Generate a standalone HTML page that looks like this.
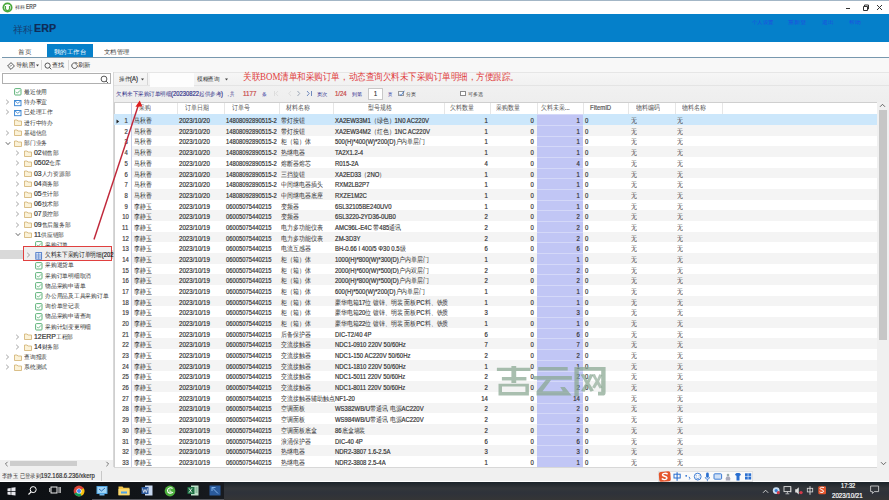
<!DOCTYPE html><html><head><meta charset="utf-8"><style>
*{margin:0;padding:0;box-sizing:border-box}
html,body{width:889px;height:500px;overflow:hidden;background:#fff;font-family:"Liberation Sans",sans-serif;color:#333}
div,p,svg{position:absolute}
p{white-space:nowrap;line-height:10px;-webkit-text-stroke-width:0.2px}
.c2{font-size:1.25em;font-family:"Liberation Sans",sans-serif;position:relative;top:0.4px;-webkit-text-stroke-width:0}
.c3{font-size:1.12em;font-family:"Liberation Sans",sans-serif;position:relative;top:0.4px;-webkit-text-stroke-width:0.3px}
.cjk .c,.cjk .c2,.cjk .c5{font-size:0.9375em;-webkit-text-stroke-width:0;top:0}
.cjk .c3{font-size:0.84em;-webkit-text-stroke-width:0;top:0}
.cjk i{opacity:1}
i{font-style:normal;opacity:0.35;-webkit-text-stroke-width:0}
.c5{font-size:1.25em;font-family:"Liberation Sans",sans-serif;position:relative;top:0.4px;-webkit-text-stroke-width:0.12px}
.c{font-size:1.25em;font-family:"Liberation Sans",sans-serif;-webkit-text-stroke-width:0.3px;position:relative;top:0.4px}
</style></head><body>

<div style="left:0.00px;top:0.00px;width:889.00px;height:1.00px;background:#a3b6c6"></div>
<svg style="left:2px;top:1.5px" width="12" height="11" viewBox="0 0 12 11"><circle cx="5.5" cy="5.5" r="5" fill="#4aa83c"/><circle cx="5.5" cy="5.5" r="3.2" fill="#fff"/><path d="M3.5 4 v2.6 a2 2 0 0 0 4 0 V4" stroke="#4aa83c" stroke-width="1.1" fill="none"/></svg>
<p style="left:14.60px;top:1.60px;font-size:5.50px;color:#444;transform:scaleX(1.029);transform-origin:left;"><span class="c">祥科</span></p>
<p style="left:25.80px;top:1.60px;font-size:7.00px;color:#444;transform:scaleX(0.708);transform-origin:left;">ERP</p>
<div style="left:846.00px;top:8.00px;width:4.00px;height:1.00px;background:#333"></div>
<svg style="left:862px;top:4px" width="7" height="7"><path d="M1.5 2.5h4v4h-4z M2.5 2.5v-1.5h4v4h-1" stroke="#333" stroke-width="1" fill="none"/></svg>
<svg style="left:876px;top:4px" width="7" height="7"><path d="M1 1L6 6M6 1L1 6" stroke="#333" stroke-width="1"/></svg>
<div style="left:0.00px;top:13.70px;width:889.00px;height:28.30px;background:#0580ca"></div>
<p style="left:13.00px;top:22.80px;font-size:10.50px;color:#173f72;transform:scale(1.152,1.150);transform-origin:left;"><span class="c3">祥科</span></p>
<p style="left:34.20px;top:22.80px;font-size:10.50px;color:#0f2c58;transform:scaleX(1.023);transform-origin:left;font-weight:bold">ERP</p>
<p style="left:751.50px;top:17.30px;font-size:5.00px;color:#1f4fe0;transform:scaleX(1.093);transform-origin:left;"><span class="c">个人设置</span></p>
<p style="left:788.00px;top:17.30px;font-size:5.00px;color:#1f4fe0;transform:scaleX(1.244);transform-origin:left;"><span class="c">重新登</span></p>
<p style="left:821.70px;top:17.30px;font-size:5.00px;color:#1f4fe0;transform:scaleX(1.152);transform-origin:left;"><span class="c">退出</span></p>
<p style="left:849.00px;top:17.30px;font-size:5.00px;color:#1f4fe0;transform:scaleX(1.173);transform-origin:left;"><span class="c">帮助</span></p>
<div style="left:47.20px;top:44.20px;width:45.90px;height:13.00px;background:#0580ca"></div>
<p style="left:18.00px;top:46.80px;font-size:6.40px;color:#333;transform:scaleX(1.100);transform-origin:left;"><span class="c">首页</span></p>
<p style="left:54.00px;top:46.80px;font-size:6.40px;color:#fff;transform:scaleX(1.067);transform-origin:left;"><span class="c">我的工作台</span></p>
<p style="left:103.70px;top:46.80px;font-size:6.40px;color:#333;transform:scaleX(1.054);transform-origin:left;"><span class="c">文档管理</span></p>
<div style="left:2.00px;top:56.80px;width:887.00px;height:1.10px;background:#7898ae"></div>
<div style="left:0.00px;top:58.00px;width:889.00px;height:14.00px;background:#f8f8f8"></div>
<svg style="left:7px;top:61.5px" width="8" height="8"><path d="M4 0.6L7.4 4L4 7.4L0.6 4Z" stroke="#444" stroke-width="0.9" fill="none"/><path d="M3 4.6l1.6-1.6" stroke="#444" stroke-width="0.8"/></svg>
<p style="left:16.00px;top:60.30px;font-size:6.00px;color:#333;transform:scaleX(1.049);transform-origin:left;"><span class="c">导航图</span></p>
<svg style="left:35.5px;top:64px" width="3" height="3"><path d="M0 0.5h3L1.5 2.5z" fill="#444"/></svg>
<div style="left:41.00px;top:60.00px;width:0.70px;height:10.00px;background:#d8d8d8"></div>
<svg style="left:43.5px;top:61.5px" width="8" height="8"><circle cx="3.6" cy="3.6" r="2.6" stroke="#444" stroke-width="0.9" fill="none"/><path d="M5.5 5.5L7.3 7.3" stroke="#444" stroke-width="0.9"/></svg>
<p style="left:52.30px;top:60.30px;font-size:6.00px;color:#333;transform:scaleX(1.013);transform-origin:left;"><span class="c">查找</span></p>
<div style="left:68.30px;top:60.00px;width:0.70px;height:10.00px;background:#d8d8d8"></div>
<svg style="left:70.5px;top:61.5px" width="8" height="8"><path d="M6.3 3.2A2.8 2.8 0 1 1 5 1.3" stroke="#444" stroke-width="0.9" fill="none"/><path d="M4.4 0.3L6.2 1.2L5 2.8" stroke="#444" stroke-width="0.8" fill="none"/></svg>
<p style="left:78.40px;top:60.30px;font-size:6.00px;color:#333;transform:scaleX(1.049);transform-origin:left;"><span class="c">刷新</span></p>
<div style="left:0.00px;top:72.00px;width:112.70px;height:396.00px;background:#fff"></div>
<div style="left:1.80px;top:73.00px;width:109.00px;height:11.30px;border:0.9px solid #b0b0b0;background:#fff"></div>
<svg style="left:100px;top:74.5px" width="9" height="9"><circle cx="4" cy="4" r="2.9" stroke="#444" stroke-width="0.9" fill="none"/><path d="M6.1 6.1L8 8" stroke="#444" stroke-width="0.9"/></svg>
<div style="left:112.70px;top:72.00px;width:0.90px;height:396.00px;background:#d8d8d8"></div>
<svg style="left:14.20px;top:88.40px" width="8" height="8"><rect x="0.6" y="0.6" width="6.4" height="6.4" rx="0.8" stroke="#4caa6a" stroke-width="0.9" fill="#fff"/><path d="M2 3.8l1.4 1.4l2.6-2.8" stroke="#4caa6a" stroke-width="0.8" fill="none"/></svg>
<p style="left:24.20px;top:87.00px;font-size:7.20px;color:#333;transform:scaleX(0.960);transform-origin:left;"><span class="c3">最近使用</span></p>
<svg style="left:5.20px;top:99.20px" width="5" height="6"><path d="M1.2 0.8L3.6 3L1.2 5.2" stroke="#999" stroke-width="0.9" fill="none"/></svg>
<svg style="left:14.20px;top:98.60px" width="8" height="8"><rect x="0.6" y="1.5" width="6.4" height="5.2" stroke="#2f7fd0" stroke-width="0.9" fill="#fff"/><path d="M0.8 1.8L3.8 4.4L6.8 1.8" stroke="#2f7fd0" stroke-width="0.8" fill="none"/></svg>
<p style="left:24.20px;top:97.20px;font-size:7.20px;color:#333;transform:scaleX(0.960);transform-origin:left;"><span class="c3">待办事宜</span></p>
<svg style="left:5.20px;top:109.40px" width="5" height="6"><path d="M1.2 0.8L3.6 3L1.2 5.2" stroke="#999" stroke-width="0.9" fill="none"/></svg>
<svg style="left:14.20px;top:108.80px" width="8" height="8"><rect x="0.6" y="1.5" width="6.4" height="5.2" stroke="#2f7fd0" stroke-width="0.9" fill="#fff"/><path d="M0.8 1.8L3.8 4.4L6.8 1.8" stroke="#2f7fd0" stroke-width="0.8" fill="none"/></svg>
<p style="left:24.20px;top:107.40px;font-size:7.20px;color:#333;transform:scaleX(0.960);transform-origin:left;"><span class="c3">已处理工作</span></p>
<svg style="left:14.20px;top:119.20px" width="8" height="7"><path d="M0.5 1h2.6l0.8 1h3.6v4.5h-7z" stroke="#d1b06e" stroke-width="0.8" fill="#fbf2d8"/></svg>
<p style="left:24.20px;top:117.60px;font-size:7.20px;color:#333;transform:scaleX(0.960);transform-origin:left;"><span class="c3">进行中待办</span></p>
<svg style="left:5.20px;top:129.80px" width="5" height="6"><path d="M1.2 0.8L3.6 3L1.2 5.2" stroke="#999" stroke-width="0.9" fill="none"/></svg>
<svg style="left:14.20px;top:129.40px" width="8" height="7"><path d="M0.5 1h2.6l0.8 1h3.6v4.5h-7z" stroke="#d1b06e" stroke-width="0.8" fill="#fbf2d8"/></svg>
<p style="left:24.20px;top:127.80px;font-size:7.20px;color:#333;transform:scaleX(0.960);transform-origin:left;"><span class="c3">基础信息</span></p>
<svg style="left:4.70px;top:140.50px" width="6" height="5"><path d="M0.8 1.2L3 3.6L5.2 1.2" stroke="#555" stroke-width="0.9" fill="none"/></svg>
<svg style="left:14.20px;top:139.60px" width="8" height="7"><path d="M0.5 1h2.6l0.8 1h3.6v4.5h-7z" stroke="#d1b06e" stroke-width="0.8" fill="#fbf2d8"/></svg>
<p style="left:24.20px;top:138.00px;font-size:7.20px;color:#333;transform:scaleX(0.960);transform-origin:left;"><span class="c3">部门业务</span></p>
<svg style="left:15.40px;top:150.20px" width="5" height="6"><path d="M1.2 0.8L3.6 3L1.2 5.2" stroke="#999" stroke-width="0.9" fill="none"/></svg>
<svg style="left:24.40px;top:149.80px" width="8" height="7"><path d="M0.5 1h2.6l0.8 1h3.6v4.5h-7z" stroke="#d1b06e" stroke-width="0.8" fill="#fbf2d8"/></svg>
<p style="left:34.40px;top:148.20px;font-size:7.20px;color:#333;transform:scaleX(0.960);transform-origin:left;">02<span class="c3">销售部</span></p>
<svg style="left:15.40px;top:160.40px" width="5" height="6"><path d="M1.2 0.8L3.6 3L1.2 5.2" stroke="#999" stroke-width="0.9" fill="none"/></svg>
<svg style="left:24.40px;top:160.00px" width="8" height="7"><path d="M0.5 1h2.6l0.8 1h3.6v4.5h-7z" stroke="#d1b06e" stroke-width="0.8" fill="#fbf2d8"/></svg>
<p style="left:34.40px;top:158.40px;font-size:7.20px;color:#333;transform:scaleX(0.960);transform-origin:left;">0502<span class="c3">仓库</span></p>
<svg style="left:15.40px;top:170.60px" width="5" height="6"><path d="M1.2 0.8L3.6 3L1.2 5.2" stroke="#999" stroke-width="0.9" fill="none"/></svg>
<svg style="left:24.40px;top:170.20px" width="8" height="7"><path d="M0.5 1h2.6l0.8 1h3.6v4.5h-7z" stroke="#d1b06e" stroke-width="0.8" fill="#fbf2d8"/></svg>
<p style="left:34.40px;top:168.60px;font-size:7.20px;color:#333;transform:scaleX(0.960);transform-origin:left;">03<span class="c3">人力资源部</span></p>
<svg style="left:15.40px;top:180.80px" width="5" height="6"><path d="M1.2 0.8L3.6 3L1.2 5.2" stroke="#999" stroke-width="0.9" fill="none"/></svg>
<svg style="left:24.40px;top:180.40px" width="8" height="7"><path d="M0.5 1h2.6l0.8 1h3.6v4.5h-7z" stroke="#d1b06e" stroke-width="0.8" fill="#fbf2d8"/></svg>
<p style="left:34.40px;top:178.80px;font-size:7.20px;color:#333;transform:scaleX(0.960);transform-origin:left;">04<span class="c3">商务部</span></p>
<svg style="left:15.40px;top:191.00px" width="5" height="6"><path d="M1.2 0.8L3.6 3L1.2 5.2" stroke="#999" stroke-width="0.9" fill="none"/></svg>
<svg style="left:24.40px;top:190.60px" width="8" height="7"><path d="M0.5 1h2.6l0.8 1h3.6v4.5h-7z" stroke="#d1b06e" stroke-width="0.8" fill="#fbf2d8"/></svg>
<p style="left:34.40px;top:189.00px;font-size:7.20px;color:#333;transform:scaleX(0.960);transform-origin:left;">05<span class="c3">生计部</span></p>
<svg style="left:15.40px;top:201.20px" width="5" height="6"><path d="M1.2 0.8L3.6 3L1.2 5.2" stroke="#999" stroke-width="0.9" fill="none"/></svg>
<svg style="left:24.40px;top:200.80px" width="8" height="7"><path d="M0.5 1h2.6l0.8 1h3.6v4.5h-7z" stroke="#d1b06e" stroke-width="0.8" fill="#fbf2d8"/></svg>
<p style="left:34.40px;top:199.20px;font-size:7.20px;color:#333;transform:scaleX(0.960);transform-origin:left;">06<span class="c3">技术部</span></p>
<svg style="left:15.40px;top:211.40px" width="5" height="6"><path d="M1.2 0.8L3.6 3L1.2 5.2" stroke="#999" stroke-width="0.9" fill="none"/></svg>
<svg style="left:24.40px;top:211.00px" width="8" height="7"><path d="M0.5 1h2.6l0.8 1h3.6v4.5h-7z" stroke="#d1b06e" stroke-width="0.8" fill="#fbf2d8"/></svg>
<p style="left:34.40px;top:209.40px;font-size:7.20px;color:#333;transform:scaleX(0.960);transform-origin:left;">07<span class="c3">质控部</span></p>
<svg style="left:15.40px;top:221.60px" width="5" height="6"><path d="M1.2 0.8L3.6 3L1.2 5.2" stroke="#999" stroke-width="0.9" fill="none"/></svg>
<svg style="left:24.40px;top:221.20px" width="8" height="7"><path d="M0.5 1h2.6l0.8 1h3.6v4.5h-7z" stroke="#d1b06e" stroke-width="0.8" fill="#fbf2d8"/></svg>
<p style="left:34.40px;top:219.60px;font-size:7.20px;color:#333;transform:scaleX(0.960);transform-origin:left;">09<span class="c3">售后服务部</span></p>
<svg style="left:14.90px;top:232.30px" width="6" height="5"><path d="M0.8 1.2L3 3.6L5.2 1.2" stroke="#555" stroke-width="0.9" fill="none"/></svg>
<svg style="left:24.40px;top:231.40px" width="8" height="7"><path d="M0.5 1h2.6l0.8 1h3.6v4.5h-7z" stroke="#d1b06e" stroke-width="0.8" fill="#fbf2d8"/></svg>
<p style="left:34.40px;top:229.80px;font-size:7.20px;color:#333;transform:scaleX(0.960);transform-origin:left;">11<span class="c3">供应链部</span></p>
<svg style="left:34.60px;top:241.40px" width="8" height="8"><rect x="0.6" y="0.6" width="6.4" height="6.4" rx="0.8" stroke="#4caa6a" stroke-width="0.9" fill="#fff"/><path d="M2 3.8l1.4 1.4l2.6-2.8" stroke="#4caa6a" stroke-width="0.8" fill="none"/></svg>
<p style="left:44.60px;top:240.00px;font-size:7.20px;color:#333;transform:scaleX(0.960);transform-origin:left;"><span class="c3">采购订单</span></p>
<div style="left:0.00px;top:250.00px;width:112.70px;height:9.40px;background:#d9d9d9"></div>
<div style="left:23.50px;top:247.00px;width:88.00px;height:13.40px;background:#efefef"></div>
<div style="left:22.80px;top:246.20px;width:89.60px;height:14.60px;border:1.1px solid #e0403f"></div>
<svg style="left:25.60px;top:252.20px" width="5" height="6"><path d="M1.2 0.8L3.6 3L1.2 5.2" stroke="#999" stroke-width="0.9" fill="none"/></svg>
<svg style="left:34.60px;top:251.60px" width="8" height="8"><rect x="0.8" y="0.6" width="5.8" height="6.6" stroke="#4a78c8" stroke-width="0.9" fill="#e2eaf8"/><path d="M0.8 3h5.8M0.8 5h5.8M3.7 0.6v6.6" stroke="#4a78c8" stroke-width="0.6"/></svg>
<p style="left:44.60px;top:250.20px;font-size:7.20px;color:#222;transform:scaleX(0.812);transform-origin:left;"><span class="c">欠料未下采购订单明细</span>(202</p>
<svg style="left:34.60px;top:261.80px" width="8" height="8"><rect x="0.6" y="0.6" width="6.4" height="6.4" rx="0.8" stroke="#4caa6a" stroke-width="0.9" fill="#fff"/><path d="M2 3.8l1.4 1.4l2.6-2.8" stroke="#4caa6a" stroke-width="0.8" fill="none"/></svg>
<p style="left:44.60px;top:260.40px;font-size:7.20px;color:#333;transform:scaleX(0.960);transform-origin:left;"><span class="c3">采购退货单</span></p>
<svg style="left:34.60px;top:272.00px" width="8" height="8"><rect x="0.6" y="0.6" width="6.4" height="6.4" rx="0.8" stroke="#4caa6a" stroke-width="0.9" fill="#fff"/><path d="M2 3.8l1.4 1.4l2.6-2.8" stroke="#4caa6a" stroke-width="0.8" fill="none"/></svg>
<p style="left:44.60px;top:270.60px;font-size:7.20px;color:#333;transform:scaleX(0.960);transform-origin:left;"><span class="c3">采购订单明细取消</span></p>
<svg style="left:34.60px;top:282.20px" width="8" height="8"><rect x="0.6" y="0.6" width="6.4" height="6.4" rx="0.8" stroke="#4caa6a" stroke-width="0.9" fill="#fff"/><path d="M2 3.8l1.4 1.4l2.6-2.8" stroke="#4caa6a" stroke-width="0.8" fill="none"/></svg>
<p style="left:44.60px;top:280.80px;font-size:7.20px;color:#333;transform:scaleX(0.960);transform-origin:left;"><span class="c3">物品采购申请单</span></p>
<svg style="left:34.60px;top:292.40px" width="8" height="8"><rect x="0.6" y="0.6" width="6.4" height="6.4" rx="0.8" stroke="#4caa6a" stroke-width="0.9" fill="#fff"/><path d="M2 3.8l1.4 1.4l2.6-2.8" stroke="#4caa6a" stroke-width="0.8" fill="none"/></svg>
<p style="left:44.60px;top:291.00px;font-size:7.20px;color:#333;transform:scaleX(0.960);transform-origin:left;"><span class="c3">办公用品及工具采购订单</span></p>
<svg style="left:34.60px;top:302.60px" width="8" height="8"><rect x="0.6" y="0.6" width="6.4" height="6.4" rx="0.8" stroke="#4caa6a" stroke-width="0.9" fill="#fff"/><path d="M2 3.8l1.4 1.4l2.6-2.8" stroke="#4caa6a" stroke-width="0.8" fill="none"/></svg>
<p style="left:44.60px;top:301.20px;font-size:7.20px;color:#333;transform:scaleX(0.960);transform-origin:left;"><span class="c3">询价单登记表</span></p>
<svg style="left:34.60px;top:312.80px" width="8" height="8"><rect x="0.6" y="0.6" width="6.4" height="6.4" rx="0.8" stroke="#4caa6a" stroke-width="0.9" fill="#fff"/><path d="M2 3.8l1.4 1.4l2.6-2.8" stroke="#4caa6a" stroke-width="0.8" fill="none"/></svg>
<p style="left:44.60px;top:311.40px;font-size:7.20px;color:#333;transform:scaleX(0.960);transform-origin:left;"><span class="c3">物品采购申请查询</span></p>
<svg style="left:34.60px;top:323.00px" width="8" height="8"><rect x="0.6" y="0.6" width="6.4" height="6.4" rx="0.8" stroke="#4caa6a" stroke-width="0.9" fill="#fff"/><path d="M2 3.8l1.4 1.4l2.6-2.8" stroke="#4caa6a" stroke-width="0.8" fill="none"/></svg>
<p style="left:44.60px;top:321.60px;font-size:7.20px;color:#333;transform:scaleX(0.960);transform-origin:left;"><span class="c3">采购计划变更明细</span></p>
<svg style="left:15.40px;top:333.80px" width="5" height="6"><path d="M1.2 0.8L3.6 3L1.2 5.2" stroke="#999" stroke-width="0.9" fill="none"/></svg>
<svg style="left:24.40px;top:333.40px" width="8" height="7"><path d="M0.5 1h2.6l0.8 1h3.6v4.5h-7z" stroke="#d1b06e" stroke-width="0.8" fill="#fbf2d8"/></svg>
<p style="left:34.40px;top:331.80px;font-size:7.20px;color:#333;transform:scaleX(0.960);transform-origin:left;">12ERP<span class="c3">工程部</span></p>
<svg style="left:15.40px;top:344.00px" width="5" height="6"><path d="M1.2 0.8L3.6 3L1.2 5.2" stroke="#999" stroke-width="0.9" fill="none"/></svg>
<svg style="left:24.40px;top:343.60px" width="8" height="7"><path d="M0.5 1h2.6l0.8 1h3.6v4.5h-7z" stroke="#d1b06e" stroke-width="0.8" fill="#fbf2d8"/></svg>
<p style="left:34.40px;top:342.00px;font-size:7.20px;color:#333;transform:scaleX(0.960);transform-origin:left;">14<span class="c3">财务部</span></p>
<svg style="left:5.20px;top:354.20px" width="5" height="6"><path d="M1.2 0.8L3.6 3L1.2 5.2" stroke="#999" stroke-width="0.9" fill="none"/></svg>
<svg style="left:14.20px;top:353.80px" width="8" height="7"><path d="M0.5 1h2.6l0.8 1h3.6v4.5h-7z" stroke="#d1b06e" stroke-width="0.8" fill="#fbf2d8"/></svg>
<p style="left:24.20px;top:352.20px;font-size:7.20px;color:#333;transform:scaleX(0.960);transform-origin:left;"><span class="c3">查询报表</span></p>
<svg style="left:5.20px;top:364.40px" width="5" height="6"><path d="M1.2 0.8L3.6 3L1.2 5.2" stroke="#999" stroke-width="0.9" fill="none"/></svg>
<svg style="left:14.20px;top:364.00px" width="8" height="7"><path d="M0.5 1h2.6l0.8 1h3.6v4.5h-7z" stroke="#d1b06e" stroke-width="0.8" fill="#fbf2d8"/></svg>
<p style="left:24.20px;top:362.40px;font-size:7.20px;color:#333;transform:scaleX(0.960);transform-origin:left;"><span class="c3">系统测试</span></p>
<div style="left:0.00px;top:459.60px;width:112.70px;height:7.40px;background:#f0f0f0"></div>
<div style="left:10.10px;top:460.60px;width:67.00px;height:5.40px;background:#cdcdcd"></div>
<svg style="left:4px;top:460.5px" width="5" height="6"><path d="M3.6 0.8L1.4 3L3.6 5.2" stroke="#666" stroke-width="0.9" fill="none"/></svg>
<svg style="left:104.5px;top:460.5px" width="5" height="6"><path d="M1.4 0.8L3.6 3L1.4 5.2" stroke="#666" stroke-width="0.9" fill="none"/></svg>
<div style="left:113.60px;top:72.00px;width:775.40px;height:29.50px;background:linear-gradient(#f3f3f3,#eeeeee)"></div>
<div style="left:113.60px;top:72.00px;width:775.40px;height:14.00px;background:linear-gradient(#f6f6f6,#f1f1f1);border-top:0.6px solid #e6e6e6;border-bottom:0.6px solid #e4e4e4"></div>
<div style="left:146.50px;top:73.00px;width:0.80px;height:12.00px;background:#d6d6d6"></div>
<div style="left:150.00px;top:72.50px;width:43.50px;height:14.00px;background:#fdfdfd"></div>
<p style="left:119.00px;top:73.60px;font-size:6.40px;color:#333;transform:scaleX(0.925);transform-origin:left;"><span class="c">操作</span>(A)</p>
<svg style="left:141px;top:77.5px" width="3" height="3"><path d="M0 0.5h3L1.5 2.5z" fill="#444"/></svg>
<p style="left:197.40px;top:73.60px;font-size:6.40px;color:#333;transform:scaleX(0.942);transform-origin:left;"><span class="c">模糊查询</span></p>
<svg style="left:225px;top:77.5px" width="3" height="3"><path d="M0 0.5h3L1.5 2.5z" fill="#444"/></svg>
<p style="left:243.00px;top:72.40px;font-size:8.40px;color:#e03c3c;transform:scale(1.065,1.250);transform-origin:left;font-family:'Liberation Serif',serif;-webkit-text-stroke-width:0"><span class="c5">关联</span>BOM<span class="c5">清单和采购订单<i>，</i>动态查询欠料未下采购订单明细<i>，</i>方便跟踪<i>。</i></span></p>
<p style="left:115.70px;top:88.90px;font-size:6.40px;color:#34348a;transform:scaleX(0.917);transform-origin:left;"><span class="c">欠料未下采购订单明细</span>(20230822<span class="c">起供参考</span>)</p>
<p style="left:225.70px;top:88.90px;font-size:6.40px;color:#34348a;transform:scaleX(0.717);transform-origin:left;"><span class="c"><i>，</i>共</span></p>
<p style="left:242.90px;top:88.90px;font-size:6.40px;color:#c84848;transform:scaleX(0.975);transform-origin:left;">1177</p>
<p style="left:262.00px;top:88.90px;font-size:6.40px;color:#3a3aa0;transform:scaleX(0.930);transform-origin:left;"><span class="c3">条</span></p>
<svg style="left:272px;top:90.40px" width="44" height="7"><path d="M2.5 1v5M6 1L3.8 3.5L6 6" stroke="#d8d8d8" stroke-width="0.8" fill="none"/><path d="M19 1L16.8 3.5L19 6" stroke="#d8d8d8" stroke-width="0.8" fill="none"/><path d="M25.5 1L27.7 3.5L25.5 6" stroke="#8a96a8" stroke-width="0.8" fill="none"/><path d="M35 1L37.2 3.5L35 6M39.5 1v5" stroke="#5070b0" stroke-width="0.8" fill="none"/></svg>
<p style="left:316.60px;top:88.90px;font-size:6.40px;color:#2c2c8c;transform:scaleX(1.062);transform-origin:left;"><span class="c3">页次</span></p>
<p style="left:334.50px;top:88.90px;font-size:6.40px;color:#c84848;transform:scaleX(0.940);transform-origin:left;">1/24</p>
<p style="left:352.30px;top:88.90px;font-size:6.40px;color:#2c2c8c;transform:scaleX(1.006);transform-origin:left;"><span class="c3">到第</span></p>
<div style="left:368.20px;top:88.00px;width:15.20px;height:11.50px;border:0.8px solid #c8c8c8;background:#fff"></div>
<p style="left:374.30px;top:88.90px;font-size:6.40px;color:#333;transform:scaleX(0.850);transform-origin:left;">1</p>
<p style="left:388.10px;top:88.90px;font-size:6.40px;color:#3a3aa0;transform:scaleX(0.874);transform-origin:left;"><span class="c3">页</span></p>
<div style="left:397.50px;top:90.70px;width:6.10px;height:5.80px;border:0.8px solid #9a9a9a;background:#f4f8fc"></div>
<svg style="left:397.5px;top:89.5px" width="7" height="7"><path d="M1.5 3.8L3 5.6L6.3 0.8" stroke="#3a70c0" stroke-width="0.8" fill="none"/></svg>
<p style="left:406.30px;top:88.90px;font-size:6.40px;color:#333;transform:scaleX(1.006);transform-origin:left;"><span class="c3">分页</span></p>
<div style="left:459.60px;top:90.70px;width:6.10px;height:5.80px;border:0.8px solid #8a8a8a;background:#fff"></div>
<p style="left:468.40px;top:88.90px;font-size:6.40px;color:#333;transform:scaleX(1.006);transform-origin:left;"><span class="c3">可多选</span></p>
<div style="left:113.50px;top:101.50px;width:763.50px;height:365.10px;background:#fff"></div>
<div style="left:113.50px;top:101.50px;width:763.50px;height:0.90px;background:#cfcfcf"></div>
<div style="left:113.50px;top:101.50px;width:0.90px;height:365.10px;background:#cfcfcf"></div>
<div style="left:130.90px;top:102.50px;width:0.80px;height:11.20px;background:#e6e6e6"></div>
<div style="left:177.10px;top:102.50px;width:0.80px;height:11.20px;background:#e6e6e6"></div>
<p style="left:139.40px;top:103.00px;font-size:7.00px;color:#555;transform:scaleX(0.850);transform-origin:left;"><span class="c">采购</span></p>
<div style="left:224.10px;top:102.50px;width:0.80px;height:11.20px;background:#e6e6e6"></div>
<p style="left:184.90px;top:103.00px;font-size:7.00px;color:#555;transform:scaleX(0.850);transform-origin:left;"><span class="c">订单日期</span></p>
<div style="left:278.60px;top:102.50px;width:0.80px;height:11.20px;background:#e6e6e6"></div>
<p style="left:231.50px;top:103.00px;font-size:7.00px;color:#555;transform:scaleX(0.850);transform-origin:left;"><span class="c">订单号</span></p>
<div style="left:332.60px;top:102.50px;width:0.80px;height:11.20px;background:#e6e6e6"></div>
<p style="left:286.00px;top:103.00px;font-size:7.00px;color:#555;transform:scaleX(0.850);transform-origin:left;"><span class="c">材料名称</span></p>
<div style="left:443.60px;top:102.50px;width:0.80px;height:11.20px;background:#e6e6e6"></div>
<p style="left:368.00px;top:103.00px;font-size:7.00px;color:#555;transform:scaleX(0.850);transform-origin:left;"><span class="c">型号规格</span></p>
<div style="left:489.60px;top:102.50px;width:0.80px;height:11.20px;background:#e6e6e6"></div>
<p style="left:450.00px;top:103.00px;font-size:7.00px;color:#555;transform:scaleX(0.850);transform-origin:left;"><span class="c">欠料数量</span></p>
<div style="left:536.60px;top:102.50px;width:0.80px;height:11.20px;background:#e6e6e6"></div>
<p style="left:496.30px;top:103.00px;font-size:7.00px;color:#555;transform:scaleX(0.850);transform-origin:left;"><span class="c">采购数量</span></p>
<div style="left:582.60px;top:102.50px;width:0.80px;height:11.20px;background:#e6e6e6"></div>
<p style="left:540.80px;top:103.00px;font-size:7.00px;color:#555;transform:scaleX(0.850);transform-origin:left;"><span class="c">欠料未采</span>...</p>
<div style="left:628.10px;top:102.50px;width:0.80px;height:11.20px;background:#e6e6e6"></div>
<p style="left:589.80px;top:103.00px;font-size:7.00px;color:#555;transform:scaleX(0.850);transform-origin:left;">FItemID</p>
<div style="left:674.60px;top:102.50px;width:0.80px;height:11.20px;background:#e6e6e6"></div>
<p style="left:635.70px;top:103.00px;font-size:7.00px;color:#555;transform:scaleX(0.850);transform-origin:left;"><span class="c">物料编码</span></p>
<div style="left:721.60px;top:102.50px;width:0.80px;height:11.20px;background:#e6e6e6"></div>
<p style="left:682.00px;top:103.00px;font-size:7.00px;color:#555;transform:scaleX(0.850);transform-origin:left;"><span class="c">物料名称</span></p>
<div style="left:113.50px;top:113.50px;width:763.50px;height:0.90px;background:#c4c4c4"></div>
<div style="left:114.40px;top:114.20px;width:762.60px;height:10.68px;background:#cce7fb"></div>
<div style="left:537.00px;top:114.20px;width:46.00px;height:10.68px;background:#c1c6f5;border-top:0.8px solid #d4d8f8"></div>
<svg style="left:115.8px;top:118.50px" width="4" height="5"><path d="M0.5 0.5L3.2 2.5L0.5 4.5z" fill="#222"/></svg>
<p style="right:760.70px;top:116.10px;font-size:7.00px;color:#444;transform:scaleX(0.850);transform-origin:right;">1</p>
<p style="left:133.80px;top:116.10px;font-size:7.00px;color:#333;transform:scaleX(0.850);transform-origin:left;"><span class="c">马秋香</span></p>
<p style="left:179.40px;top:116.10px;font-size:7.00px;color:#333;transform:scaleX(0.882);transform-origin:left;">2023/10/20</p>
<p style="left:225.80px;top:116.10px;font-size:7.00px;color:#333;transform:scaleX(0.835);transform-origin:left;">14808092890515-2</p>
<p style="left:281.00px;top:116.10px;font-size:7.00px;color:#333;transform:scaleX(0.850);transform-origin:left;"><span class="c">带灯按钮</span></p>
<p style="left:335.20px;top:116.10px;font-size:7.00px;color:#333;transform:scaleX(0.850);transform-origin:left;">XA2EW33M1<span class="c"><i>（</i>绿色<i>）</i></span>1N0 AC220V</p>
<p style="right:401.50px;top:116.10px;font-size:7.00px;color:#333;transform:scaleX(0.850);transform-origin:right;">1</p>
<p style="right:355.20px;top:116.10px;font-size:7.00px;color:#333;transform:scaleX(0.850);transform-origin:right;">0</p>
<p style="right:309.00px;top:116.10px;font-size:7.00px;color:#333;transform:scaleX(0.850);transform-origin:right;">1</p>
<p style="left:584.70px;top:116.10px;font-size:7.00px;color:#333;transform:scaleX(0.850);transform-origin:left;">0</p>
<p style="left:630.60px;top:116.10px;font-size:7.00px;color:#333;transform:scaleX(0.850);transform-origin:left;"><span class="c">无</span></p>
<p style="left:677.00px;top:116.10px;font-size:7.00px;color:#333;transform:scaleX(0.850);transform-origin:left;"><span class="c">无</span></p>
<div style="left:131.30px;top:124.88px;width:745.70px;height:10.68px;background:#f4f4f4"></div>
<div style="left:537.00px;top:124.88px;width:46.00px;height:10.68px;background:#c1c6f5;border-top:0.8px solid #d4d8f8"></div>
<p style="right:760.70px;top:126.78px;font-size:7.00px;color:#444;transform:scaleX(0.850);transform-origin:right;">2</p>
<p style="left:133.80px;top:126.78px;font-size:7.00px;color:#333;transform:scaleX(0.850);transform-origin:left;"><span class="c">马秋香</span></p>
<p style="left:179.40px;top:126.78px;font-size:7.00px;color:#333;transform:scaleX(0.882);transform-origin:left;">2023/10/20</p>
<p style="left:225.80px;top:126.78px;font-size:7.00px;color:#333;transform:scaleX(0.835);transform-origin:left;">14808092890515-2</p>
<p style="left:281.00px;top:126.78px;font-size:7.00px;color:#333;transform:scaleX(0.850);transform-origin:left;"><span class="c">带灯按钮</span></p>
<p style="left:335.20px;top:126.78px;font-size:7.00px;color:#333;transform:scaleX(0.850);transform-origin:left;">XA2EW34M2<span class="c"><i>（</i>红色<i>）</i></span>1NC AC220V</p>
<p style="right:401.50px;top:126.78px;font-size:7.00px;color:#333;transform:scaleX(0.850);transform-origin:right;">1</p>
<p style="right:355.20px;top:126.78px;font-size:7.00px;color:#333;transform:scaleX(0.850);transform-origin:right;">0</p>
<p style="right:309.00px;top:126.78px;font-size:7.00px;color:#333;transform:scaleX(0.850);transform-origin:right;">1</p>
<p style="left:584.70px;top:126.78px;font-size:7.00px;color:#333;transform:scaleX(0.850);transform-origin:left;">0</p>
<p style="left:630.60px;top:126.78px;font-size:7.00px;color:#333;transform:scaleX(0.850);transform-origin:left;"><span class="c">无</span></p>
<p style="left:677.00px;top:126.78px;font-size:7.00px;color:#333;transform:scaleX(0.850);transform-origin:left;"><span class="c">无</span></p>
<div style="left:537.00px;top:135.56px;width:46.00px;height:10.68px;background:#c1c6f5;border-top:0.8px solid #d4d8f8"></div>
<p style="right:760.70px;top:137.46px;font-size:7.00px;color:#444;transform:scaleX(0.850);transform-origin:right;">3</p>
<p style="left:133.80px;top:137.46px;font-size:7.00px;color:#333;transform:scaleX(0.850);transform-origin:left;"><span class="c">马秋香</span></p>
<p style="left:179.40px;top:137.46px;font-size:7.00px;color:#333;transform:scaleX(0.882);transform-origin:left;">2023/10/20</p>
<p style="left:225.80px;top:137.46px;font-size:7.00px;color:#333;transform:scaleX(0.835);transform-origin:left;">14808092890515-2</p>
<p style="left:281.00px;top:137.46px;font-size:7.00px;color:#333;transform:scaleX(0.850);transform-origin:left;"><span class="c">柜<i>（</i>箱<i>）</i>体</span></p>
<p style="left:335.20px;top:137.46px;font-size:7.00px;color:#333;transform:scaleX(0.850);transform-origin:left;">500(H)*400(W)*200(D)<span class="c">户内单层门</span></p>
<p style="right:401.50px;top:137.46px;font-size:7.00px;color:#333;transform:scaleX(0.850);transform-origin:right;">1</p>
<p style="right:355.20px;top:137.46px;font-size:7.00px;color:#333;transform:scaleX(0.850);transform-origin:right;">0</p>
<p style="right:309.00px;top:137.46px;font-size:7.00px;color:#333;transform:scaleX(0.850);transform-origin:right;">1</p>
<p style="left:584.70px;top:137.46px;font-size:7.00px;color:#333;transform:scaleX(0.850);transform-origin:left;">0</p>
<p style="left:630.60px;top:137.46px;font-size:7.00px;color:#333;transform:scaleX(0.850);transform-origin:left;"><span class="c">无</span></p>
<p style="left:677.00px;top:137.46px;font-size:7.00px;color:#333;transform:scaleX(0.850);transform-origin:left;"><span class="c">无</span></p>
<div style="left:131.30px;top:146.24px;width:745.70px;height:10.68px;background:#f4f4f4"></div>
<div style="left:537.00px;top:146.24px;width:46.00px;height:10.68px;background:#c1c6f5;border-top:0.8px solid #d4d8f8"></div>
<p style="right:760.70px;top:148.14px;font-size:7.00px;color:#444;transform:scaleX(0.850);transform-origin:right;">4</p>
<p style="left:133.80px;top:148.14px;font-size:7.00px;color:#333;transform:scaleX(0.850);transform-origin:left;"><span class="c">马秋香</span></p>
<p style="left:179.40px;top:148.14px;font-size:7.00px;color:#333;transform:scaleX(0.882);transform-origin:left;">2023/10/20</p>
<p style="left:225.80px;top:148.14px;font-size:7.00px;color:#333;transform:scaleX(0.835);transform-origin:left;">14808092890515-2</p>
<p style="left:281.00px;top:148.14px;font-size:7.00px;color:#333;transform:scaleX(0.850);transform-origin:left;"><span class="c">热继电器</span></p>
<p style="left:335.20px;top:148.14px;font-size:7.00px;color:#333;transform:scaleX(0.850);transform-origin:left;">TA2X1.2-4</p>
<p style="right:401.50px;top:148.14px;font-size:7.00px;color:#333;transform:scaleX(0.850);transform-origin:right;">1</p>
<p style="right:355.20px;top:148.14px;font-size:7.00px;color:#333;transform:scaleX(0.850);transform-origin:right;">0</p>
<p style="right:309.00px;top:148.14px;font-size:7.00px;color:#333;transform:scaleX(0.850);transform-origin:right;">1</p>
<p style="left:584.70px;top:148.14px;font-size:7.00px;color:#333;transform:scaleX(0.850);transform-origin:left;">0</p>
<p style="left:630.60px;top:148.14px;font-size:7.00px;color:#333;transform:scaleX(0.850);transform-origin:left;"><span class="c">无</span></p>
<p style="left:677.00px;top:148.14px;font-size:7.00px;color:#333;transform:scaleX(0.850);transform-origin:left;"><span class="c">无</span></p>
<div style="left:537.00px;top:156.92px;width:46.00px;height:10.68px;background:#c1c6f5;border-top:0.8px solid #d4d8f8"></div>
<p style="right:760.70px;top:158.82px;font-size:7.00px;color:#444;transform:scaleX(0.850);transform-origin:right;">5</p>
<p style="left:133.80px;top:158.82px;font-size:7.00px;color:#333;transform:scaleX(0.850);transform-origin:left;"><span class="c">马秋香</span></p>
<p style="left:179.40px;top:158.82px;font-size:7.00px;color:#333;transform:scaleX(0.882);transform-origin:left;">2023/10/20</p>
<p style="left:225.80px;top:158.82px;font-size:7.00px;color:#333;transform:scaleX(0.835);transform-origin:left;">14808092890515-2</p>
<p style="left:281.00px;top:158.82px;font-size:7.00px;color:#333;transform:scaleX(0.850);transform-origin:left;"><span class="c">熔断器熔芯</span></p>
<p style="left:335.20px;top:158.82px;font-size:7.00px;color:#333;transform:scaleX(0.850);transform-origin:left;">R015-2A</p>
<p style="right:401.50px;top:158.82px;font-size:7.00px;color:#333;transform:scaleX(0.850);transform-origin:right;">4</p>
<p style="right:355.20px;top:158.82px;font-size:7.00px;color:#333;transform:scaleX(0.850);transform-origin:right;">0</p>
<p style="right:309.00px;top:158.82px;font-size:7.00px;color:#333;transform:scaleX(0.850);transform-origin:right;">4</p>
<p style="left:584.70px;top:158.82px;font-size:7.00px;color:#333;transform:scaleX(0.850);transform-origin:left;">0</p>
<p style="left:630.60px;top:158.82px;font-size:7.00px;color:#333;transform:scaleX(0.850);transform-origin:left;"><span class="c">无</span></p>
<p style="left:677.00px;top:158.82px;font-size:7.00px;color:#333;transform:scaleX(0.850);transform-origin:left;"><span class="c">无</span></p>
<div style="left:131.30px;top:167.60px;width:745.70px;height:10.68px;background:#f4f4f4"></div>
<div style="left:537.00px;top:167.60px;width:46.00px;height:10.68px;background:#c1c6f5;border-top:0.8px solid #d4d8f8"></div>
<p style="right:760.70px;top:169.50px;font-size:7.00px;color:#444;transform:scaleX(0.850);transform-origin:right;">6</p>
<p style="left:133.80px;top:169.50px;font-size:7.00px;color:#333;transform:scaleX(0.850);transform-origin:left;"><span class="c">马秋香</span></p>
<p style="left:179.40px;top:169.50px;font-size:7.00px;color:#333;transform:scaleX(0.882);transform-origin:left;">2023/10/20</p>
<p style="left:225.80px;top:169.50px;font-size:7.00px;color:#333;transform:scaleX(0.835);transform-origin:left;">14808092890515-2</p>
<p style="left:281.00px;top:169.50px;font-size:7.00px;color:#333;transform:scaleX(0.850);transform-origin:left;"><span class="c">三挡旋钮</span></p>
<p style="left:335.20px;top:169.50px;font-size:7.00px;color:#333;transform:scaleX(0.850);transform-origin:left;">XA2ED33<span class="c"><i>（</i></span>2NO<span class="c"><i>）</i></span></p>
<p style="right:401.50px;top:169.50px;font-size:7.00px;color:#333;transform:scaleX(0.850);transform-origin:right;">1</p>
<p style="right:355.20px;top:169.50px;font-size:7.00px;color:#333;transform:scaleX(0.850);transform-origin:right;">0</p>
<p style="right:309.00px;top:169.50px;font-size:7.00px;color:#333;transform:scaleX(0.850);transform-origin:right;">1</p>
<p style="left:584.70px;top:169.50px;font-size:7.00px;color:#333;transform:scaleX(0.850);transform-origin:left;">0</p>
<p style="left:630.60px;top:169.50px;font-size:7.00px;color:#333;transform:scaleX(0.850);transform-origin:left;"><span class="c">无</span></p>
<p style="left:677.00px;top:169.50px;font-size:7.00px;color:#333;transform:scaleX(0.850);transform-origin:left;"><span class="c">无</span></p>
<div style="left:537.00px;top:178.28px;width:46.00px;height:10.68px;background:#c1c6f5;border-top:0.8px solid #d4d8f8"></div>
<p style="right:760.70px;top:180.18px;font-size:7.00px;color:#444;transform:scaleX(0.850);transform-origin:right;">7</p>
<p style="left:133.80px;top:180.18px;font-size:7.00px;color:#333;transform:scaleX(0.850);transform-origin:left;"><span class="c">马秋香</span></p>
<p style="left:179.40px;top:180.18px;font-size:7.00px;color:#333;transform:scaleX(0.882);transform-origin:left;">2023/10/20</p>
<p style="left:225.80px;top:180.18px;font-size:7.00px;color:#333;transform:scaleX(0.835);transform-origin:left;">14808092890515-2</p>
<p style="left:281.00px;top:180.18px;font-size:7.00px;color:#333;transform:scaleX(0.850);transform-origin:left;"><span class="c">中间继电器插头</span></p>
<p style="left:335.20px;top:180.18px;font-size:7.00px;color:#333;transform:scaleX(0.850);transform-origin:left;">RXM2LB2P7</p>
<p style="right:401.50px;top:180.18px;font-size:7.00px;color:#333;transform:scaleX(0.850);transform-origin:right;">1</p>
<p style="right:355.20px;top:180.18px;font-size:7.00px;color:#333;transform:scaleX(0.850);transform-origin:right;">0</p>
<p style="right:309.00px;top:180.18px;font-size:7.00px;color:#333;transform:scaleX(0.850);transform-origin:right;">1</p>
<p style="left:584.70px;top:180.18px;font-size:7.00px;color:#333;transform:scaleX(0.850);transform-origin:left;">0</p>
<p style="left:630.60px;top:180.18px;font-size:7.00px;color:#333;transform:scaleX(0.850);transform-origin:left;"><span class="c">无</span></p>
<p style="left:677.00px;top:180.18px;font-size:7.00px;color:#333;transform:scaleX(0.850);transform-origin:left;"><span class="c">无</span></p>
<div style="left:131.30px;top:188.96px;width:745.70px;height:10.68px;background:#f4f4f4"></div>
<div style="left:537.00px;top:188.96px;width:46.00px;height:10.68px;background:#c1c6f5;border-top:0.8px solid #d4d8f8"></div>
<p style="right:760.70px;top:190.86px;font-size:7.00px;color:#444;transform:scaleX(0.850);transform-origin:right;">8</p>
<p style="left:133.80px;top:190.86px;font-size:7.00px;color:#333;transform:scaleX(0.850);transform-origin:left;"><span class="c">马秋香</span></p>
<p style="left:179.40px;top:190.86px;font-size:7.00px;color:#333;transform:scaleX(0.882);transform-origin:left;">2023/10/20</p>
<p style="left:225.80px;top:190.86px;font-size:7.00px;color:#333;transform:scaleX(0.835);transform-origin:left;">14808092890515-2</p>
<p style="left:281.00px;top:190.86px;font-size:7.00px;color:#333;transform:scaleX(0.850);transform-origin:left;"><span class="c">中间继电器底座</span></p>
<p style="left:335.20px;top:190.86px;font-size:7.00px;color:#333;transform:scaleX(0.850);transform-origin:left;">RXZE1M2C</p>
<p style="right:401.50px;top:190.86px;font-size:7.00px;color:#333;transform:scaleX(0.850);transform-origin:right;">1</p>
<p style="right:355.20px;top:190.86px;font-size:7.00px;color:#333;transform:scaleX(0.850);transform-origin:right;">0</p>
<p style="right:309.00px;top:190.86px;font-size:7.00px;color:#333;transform:scaleX(0.850);transform-origin:right;">1</p>
<p style="left:584.70px;top:190.86px;font-size:7.00px;color:#333;transform:scaleX(0.850);transform-origin:left;">0</p>
<p style="left:630.60px;top:190.86px;font-size:7.00px;color:#333;transform:scaleX(0.850);transform-origin:left;"><span class="c">无</span></p>
<p style="left:677.00px;top:190.86px;font-size:7.00px;color:#333;transform:scaleX(0.850);transform-origin:left;"><span class="c">无</span></p>
<div style="left:537.00px;top:199.64px;width:46.00px;height:10.68px;background:#c1c6f5;border-top:0.8px solid #d4d8f8"></div>
<p style="right:760.70px;top:201.54px;font-size:7.00px;color:#444;transform:scaleX(0.850);transform-origin:right;">9</p>
<p style="left:133.80px;top:201.54px;font-size:7.00px;color:#333;transform:scaleX(0.850);transform-origin:left;"><span class="c">李静玉</span></p>
<p style="left:179.40px;top:201.54px;font-size:7.00px;color:#333;transform:scaleX(0.882);transform-origin:left;">2023/10/19</p>
<p style="left:225.80px;top:201.54px;font-size:7.00px;color:#333;transform:scaleX(0.835);transform-origin:left;">06005075440215</p>
<p style="left:281.00px;top:201.54px;font-size:7.00px;color:#333;transform:scaleX(0.850);transform-origin:left;"><span class="c">变频器</span></p>
<p style="left:335.20px;top:201.54px;font-size:7.00px;color:#333;transform:scaleX(0.850);transform-origin:left;">6SL32105BE240UV0</p>
<p style="right:401.50px;top:201.54px;font-size:7.00px;color:#333;transform:scaleX(0.850);transform-origin:right;">1</p>
<p style="right:355.20px;top:201.54px;font-size:7.00px;color:#333;transform:scaleX(0.850);transform-origin:right;">0</p>
<p style="right:309.00px;top:201.54px;font-size:7.00px;color:#333;transform:scaleX(0.850);transform-origin:right;">1</p>
<p style="left:584.70px;top:201.54px;font-size:7.00px;color:#333;transform:scaleX(0.850);transform-origin:left;">0</p>
<p style="left:630.60px;top:201.54px;font-size:7.00px;color:#333;transform:scaleX(0.850);transform-origin:left;"><span class="c">无</span></p>
<p style="left:677.00px;top:201.54px;font-size:7.00px;color:#333;transform:scaleX(0.850);transform-origin:left;"><span class="c">无</span></p>
<div style="left:131.30px;top:210.32px;width:745.70px;height:10.68px;background:#f4f4f4"></div>
<div style="left:537.00px;top:210.32px;width:46.00px;height:10.68px;background:#c1c6f5;border-top:0.8px solid #d4d8f8"></div>
<p style="right:760.70px;top:212.22px;font-size:7.00px;color:#444;transform:scaleX(0.850);transform-origin:right;">10</p>
<p style="left:133.80px;top:212.22px;font-size:7.00px;color:#333;transform:scaleX(0.850);transform-origin:left;"><span class="c">李静玉</span></p>
<p style="left:179.40px;top:212.22px;font-size:7.00px;color:#333;transform:scaleX(0.882);transform-origin:left;">2023/10/19</p>
<p style="left:225.80px;top:212.22px;font-size:7.00px;color:#333;transform:scaleX(0.835);transform-origin:left;">06005075440215</p>
<p style="left:281.00px;top:212.22px;font-size:7.00px;color:#333;transform:scaleX(0.850);transform-origin:left;"><span class="c">变频器</span></p>
<p style="left:335.20px;top:212.22px;font-size:7.00px;color:#333;transform:scaleX(0.850);transform-origin:left;">6SL3220-2YD36-0UB0</p>
<p style="right:401.50px;top:212.22px;font-size:7.00px;color:#333;transform:scaleX(0.850);transform-origin:right;">2</p>
<p style="right:355.20px;top:212.22px;font-size:7.00px;color:#333;transform:scaleX(0.850);transform-origin:right;">0</p>
<p style="right:309.00px;top:212.22px;font-size:7.00px;color:#333;transform:scaleX(0.850);transform-origin:right;">2</p>
<p style="left:584.70px;top:212.22px;font-size:7.00px;color:#333;transform:scaleX(0.850);transform-origin:left;">0</p>
<p style="left:630.60px;top:212.22px;font-size:7.00px;color:#333;transform:scaleX(0.850);transform-origin:left;"><span class="c">无</span></p>
<p style="left:677.00px;top:212.22px;font-size:7.00px;color:#333;transform:scaleX(0.850);transform-origin:left;"><span class="c">无</span></p>
<div style="left:537.00px;top:221.00px;width:46.00px;height:10.68px;background:#c1c6f5;border-top:0.8px solid #d4d8f8"></div>
<p style="right:760.70px;top:222.90px;font-size:7.00px;color:#444;transform:scaleX(0.850);transform-origin:right;">11</p>
<p style="left:133.80px;top:222.90px;font-size:7.00px;color:#333;transform:scaleX(0.850);transform-origin:left;"><span class="c">李静玉</span></p>
<p style="left:179.40px;top:222.90px;font-size:7.00px;color:#333;transform:scaleX(0.882);transform-origin:left;">2023/10/19</p>
<p style="left:225.80px;top:222.90px;font-size:7.00px;color:#333;transform:scaleX(0.835);transform-origin:left;">06005075440215</p>
<p style="left:281.00px;top:222.90px;font-size:7.00px;color:#333;transform:scaleX(0.850);transform-origin:left;"><span class="c">电力多功能仪表</span></p>
<p style="left:335.20px;top:222.90px;font-size:7.00px;color:#333;transform:scaleX(0.850);transform-origin:left;">AMC96L-E4C <span class="c">带</span>485<span class="c">通讯</span></p>
<p style="right:401.50px;top:222.90px;font-size:7.00px;color:#333;transform:scaleX(0.850);transform-origin:right;">2</p>
<p style="right:355.20px;top:222.90px;font-size:7.00px;color:#333;transform:scaleX(0.850);transform-origin:right;">0</p>
<p style="right:309.00px;top:222.90px;font-size:7.00px;color:#333;transform:scaleX(0.850);transform-origin:right;">2</p>
<p style="left:584.70px;top:222.90px;font-size:7.00px;color:#333;transform:scaleX(0.850);transform-origin:left;">0</p>
<p style="left:630.60px;top:222.90px;font-size:7.00px;color:#333;transform:scaleX(0.850);transform-origin:left;"><span class="c">无</span></p>
<p style="left:677.00px;top:222.90px;font-size:7.00px;color:#333;transform:scaleX(0.850);transform-origin:left;"><span class="c">无</span></p>
<div style="left:131.30px;top:231.68px;width:745.70px;height:10.68px;background:#f4f4f4"></div>
<div style="left:537.00px;top:231.68px;width:46.00px;height:10.68px;background:#c1c6f5;border-top:0.8px solid #d4d8f8"></div>
<p style="right:760.70px;top:233.58px;font-size:7.00px;color:#444;transform:scaleX(0.850);transform-origin:right;">12</p>
<p style="left:133.80px;top:233.58px;font-size:7.00px;color:#333;transform:scaleX(0.850);transform-origin:left;"><span class="c">李静玉</span></p>
<p style="left:179.40px;top:233.58px;font-size:7.00px;color:#333;transform:scaleX(0.882);transform-origin:left;">2023/10/19</p>
<p style="left:225.80px;top:233.58px;font-size:7.00px;color:#333;transform:scaleX(0.835);transform-origin:left;">06005075440215</p>
<p style="left:281.00px;top:233.58px;font-size:7.00px;color:#333;transform:scaleX(0.850);transform-origin:left;"><span class="c">电力多功能仪表</span></p>
<p style="left:335.20px;top:233.58px;font-size:7.00px;color:#333;transform:scaleX(0.850);transform-origin:left;">ZM-3D3Y</p>
<p style="right:401.50px;top:233.58px;font-size:7.00px;color:#333;transform:scaleX(0.850);transform-origin:right;">2</p>
<p style="right:355.20px;top:233.58px;font-size:7.00px;color:#333;transform:scaleX(0.850);transform-origin:right;">0</p>
<p style="right:309.00px;top:233.58px;font-size:7.00px;color:#333;transform:scaleX(0.850);transform-origin:right;">2</p>
<p style="left:584.70px;top:233.58px;font-size:7.00px;color:#333;transform:scaleX(0.850);transform-origin:left;">0</p>
<p style="left:630.60px;top:233.58px;font-size:7.00px;color:#333;transform:scaleX(0.850);transform-origin:left;"><span class="c">无</span></p>
<p style="left:677.00px;top:233.58px;font-size:7.00px;color:#333;transform:scaleX(0.850);transform-origin:left;"><span class="c">无</span></p>
<div style="left:537.00px;top:242.36px;width:46.00px;height:10.68px;background:#c1c6f5;border-top:0.8px solid #d4d8f8"></div>
<p style="right:760.70px;top:244.26px;font-size:7.00px;color:#444;transform:scaleX(0.850);transform-origin:right;">13</p>
<p style="left:133.80px;top:244.26px;font-size:7.00px;color:#333;transform:scaleX(0.850);transform-origin:left;"><span class="c">李静玉</span></p>
<p style="left:179.40px;top:244.26px;font-size:7.00px;color:#333;transform:scaleX(0.882);transform-origin:left;">2023/10/19</p>
<p style="left:225.80px;top:244.26px;font-size:7.00px;color:#333;transform:scaleX(0.835);transform-origin:left;">06005075440215</p>
<p style="left:281.00px;top:244.26px;font-size:7.00px;color:#333;transform:scaleX(0.850);transform-origin:left;"><span class="c">电流互感器</span></p>
<p style="left:335.20px;top:244.26px;font-size:7.00px;color:#333;transform:scaleX(0.850);transform-origin:left;">BH-0.66 I  400/5 Φ30 0.5<span class="c">级</span></p>
<p style="right:401.50px;top:244.26px;font-size:7.00px;color:#333;transform:scaleX(0.850);transform-origin:right;">6</p>
<p style="right:355.20px;top:244.26px;font-size:7.00px;color:#333;transform:scaleX(0.850);transform-origin:right;">0</p>
<p style="right:309.00px;top:244.26px;font-size:7.00px;color:#333;transform:scaleX(0.850);transform-origin:right;">6</p>
<p style="left:584.70px;top:244.26px;font-size:7.00px;color:#333;transform:scaleX(0.850);transform-origin:left;">0</p>
<p style="left:630.60px;top:244.26px;font-size:7.00px;color:#333;transform:scaleX(0.850);transform-origin:left;"><span class="c">无</span></p>
<p style="left:677.00px;top:244.26px;font-size:7.00px;color:#333;transform:scaleX(0.850);transform-origin:left;"><span class="c">无</span></p>
<div style="left:131.30px;top:253.04px;width:745.70px;height:10.68px;background:#f4f4f4"></div>
<div style="left:537.00px;top:253.04px;width:46.00px;height:10.68px;background:#c1c6f5;border-top:0.8px solid #d4d8f8"></div>
<p style="right:760.70px;top:254.94px;font-size:7.00px;color:#444;transform:scaleX(0.850);transform-origin:right;">14</p>
<p style="left:133.80px;top:254.94px;font-size:7.00px;color:#333;transform:scaleX(0.850);transform-origin:left;"><span class="c">李静玉</span></p>
<p style="left:179.40px;top:254.94px;font-size:7.00px;color:#333;transform:scaleX(0.882);transform-origin:left;">2023/10/19</p>
<p style="left:225.80px;top:254.94px;font-size:7.00px;color:#333;transform:scaleX(0.835);transform-origin:left;">06005075440215</p>
<p style="left:281.00px;top:254.94px;font-size:7.00px;color:#333;transform:scaleX(0.850);transform-origin:left;"><span class="c">柜<i>（</i>箱<i>）</i>体</span></p>
<p style="left:335.20px;top:254.94px;font-size:7.00px;color:#333;transform:scaleX(0.850);transform-origin:left;">1000(H)*800(W)*300(D)<span class="c">户内单层门</span></p>
<p style="right:401.50px;top:254.94px;font-size:7.00px;color:#333;transform:scaleX(0.850);transform-origin:right;">1</p>
<p style="right:355.20px;top:254.94px;font-size:7.00px;color:#333;transform:scaleX(0.850);transform-origin:right;">0</p>
<p style="right:309.00px;top:254.94px;font-size:7.00px;color:#333;transform:scaleX(0.850);transform-origin:right;">1</p>
<p style="left:584.70px;top:254.94px;font-size:7.00px;color:#333;transform:scaleX(0.850);transform-origin:left;">0</p>
<p style="left:630.60px;top:254.94px;font-size:7.00px;color:#333;transform:scaleX(0.850);transform-origin:left;"><span class="c">无</span></p>
<p style="left:677.00px;top:254.94px;font-size:7.00px;color:#333;transform:scaleX(0.850);transform-origin:left;"><span class="c">无</span></p>
<div style="left:537.00px;top:263.72px;width:46.00px;height:10.68px;background:#c1c6f5;border-top:0.8px solid #d4d8f8"></div>
<p style="right:760.70px;top:265.62px;font-size:7.00px;color:#444;transform:scaleX(0.850);transform-origin:right;">15</p>
<p style="left:133.80px;top:265.62px;font-size:7.00px;color:#333;transform:scaleX(0.850);transform-origin:left;"><span class="c">李静玉</span></p>
<p style="left:179.40px;top:265.62px;font-size:7.00px;color:#333;transform:scaleX(0.882);transform-origin:left;">2023/10/19</p>
<p style="left:225.80px;top:265.62px;font-size:7.00px;color:#333;transform:scaleX(0.835);transform-origin:left;">06005075440215</p>
<p style="left:281.00px;top:265.62px;font-size:7.00px;color:#333;transform:scaleX(0.850);transform-origin:left;"><span class="c">柜<i>（</i>箱<i>）</i>体</span></p>
<p style="left:335.20px;top:265.62px;font-size:7.00px;color:#333;transform:scaleX(0.850);transform-origin:left;">2000(H)*600(W)*500(D)<span class="c">户内双层门</span></p>
<p style="right:401.50px;top:265.62px;font-size:7.00px;color:#333;transform:scaleX(0.850);transform-origin:right;">2</p>
<p style="right:355.20px;top:265.62px;font-size:7.00px;color:#333;transform:scaleX(0.850);transform-origin:right;">0</p>
<p style="right:309.00px;top:265.62px;font-size:7.00px;color:#333;transform:scaleX(0.850);transform-origin:right;">2</p>
<p style="left:584.70px;top:265.62px;font-size:7.00px;color:#333;transform:scaleX(0.850);transform-origin:left;">0</p>
<p style="left:630.60px;top:265.62px;font-size:7.00px;color:#333;transform:scaleX(0.850);transform-origin:left;"><span class="c">无</span></p>
<p style="left:677.00px;top:265.62px;font-size:7.00px;color:#333;transform:scaleX(0.850);transform-origin:left;"><span class="c">无</span></p>
<div style="left:131.30px;top:274.40px;width:745.70px;height:10.68px;background:#f4f4f4"></div>
<div style="left:537.00px;top:274.40px;width:46.00px;height:10.68px;background:#c1c6f5;border-top:0.8px solid #d4d8f8"></div>
<p style="right:760.70px;top:276.30px;font-size:7.00px;color:#444;transform:scaleX(0.850);transform-origin:right;">16</p>
<p style="left:133.80px;top:276.30px;font-size:7.00px;color:#333;transform:scaleX(0.850);transform-origin:left;"><span class="c">李静玉</span></p>
<p style="left:179.40px;top:276.30px;font-size:7.00px;color:#333;transform:scaleX(0.882);transform-origin:left;">2023/10/19</p>
<p style="left:225.80px;top:276.30px;font-size:7.00px;color:#333;transform:scaleX(0.835);transform-origin:left;">06005075440215</p>
<p style="left:281.00px;top:276.30px;font-size:7.00px;color:#333;transform:scaleX(0.850);transform-origin:left;"><span class="c">柜<i>（</i>箱<i>）</i>体</span></p>
<p style="left:335.20px;top:276.30px;font-size:7.00px;color:#333;transform:scaleX(0.850);transform-origin:left;">2000(H)*800(W)*500(D)<span class="c">户内单层门</span></p>
<p style="right:401.50px;top:276.30px;font-size:7.00px;color:#333;transform:scaleX(0.850);transform-origin:right;">2</p>
<p style="right:355.20px;top:276.30px;font-size:7.00px;color:#333;transform:scaleX(0.850);transform-origin:right;">0</p>
<p style="right:309.00px;top:276.30px;font-size:7.00px;color:#333;transform:scaleX(0.850);transform-origin:right;">2</p>
<p style="left:584.70px;top:276.30px;font-size:7.00px;color:#333;transform:scaleX(0.850);transform-origin:left;">0</p>
<p style="left:630.60px;top:276.30px;font-size:7.00px;color:#333;transform:scaleX(0.850);transform-origin:left;"><span class="c">无</span></p>
<p style="left:677.00px;top:276.30px;font-size:7.00px;color:#333;transform:scaleX(0.850);transform-origin:left;"><span class="c">无</span></p>
<div style="left:537.00px;top:285.08px;width:46.00px;height:10.68px;background:#c1c6f5;border-top:0.8px solid #d4d8f8"></div>
<p style="right:760.70px;top:286.98px;font-size:7.00px;color:#444;transform:scaleX(0.850);transform-origin:right;">17</p>
<p style="left:133.80px;top:286.98px;font-size:7.00px;color:#333;transform:scaleX(0.850);transform-origin:left;"><span class="c">李静玉</span></p>
<p style="left:179.40px;top:286.98px;font-size:7.00px;color:#333;transform:scaleX(0.882);transform-origin:left;">2023/10/19</p>
<p style="left:225.80px;top:286.98px;font-size:7.00px;color:#333;transform:scaleX(0.835);transform-origin:left;">06005075440215</p>
<p style="left:281.00px;top:286.98px;font-size:7.00px;color:#333;transform:scaleX(0.850);transform-origin:left;"><span class="c">柜<i>（</i>箱<i>）</i>体</span></p>
<p style="left:335.20px;top:286.98px;font-size:7.00px;color:#333;transform:scaleX(0.850);transform-origin:left;">600(H)*500(W)*200(D)<span class="c">户内单层门</span></p>
<p style="right:401.50px;top:286.98px;font-size:7.00px;color:#333;transform:scaleX(0.850);transform-origin:right;">1</p>
<p style="right:355.20px;top:286.98px;font-size:7.00px;color:#333;transform:scaleX(0.850);transform-origin:right;">0</p>
<p style="right:309.00px;top:286.98px;font-size:7.00px;color:#333;transform:scaleX(0.850);transform-origin:right;">1</p>
<p style="left:584.70px;top:286.98px;font-size:7.00px;color:#333;transform:scaleX(0.850);transform-origin:left;">0</p>
<p style="left:630.60px;top:286.98px;font-size:7.00px;color:#333;transform:scaleX(0.850);transform-origin:left;"><span class="c">无</span></p>
<p style="left:677.00px;top:286.98px;font-size:7.00px;color:#333;transform:scaleX(0.850);transform-origin:left;"><span class="c">无</span></p>
<div style="left:131.30px;top:295.76px;width:745.70px;height:10.68px;background:#f4f4f4"></div>
<div style="left:537.00px;top:295.76px;width:46.00px;height:10.68px;background:#c1c6f5;border-top:0.8px solid #d4d8f8"></div>
<p style="right:760.70px;top:297.66px;font-size:7.00px;color:#444;transform:scaleX(0.850);transform-origin:right;">18</p>
<p style="left:133.80px;top:297.66px;font-size:7.00px;color:#333;transform:scaleX(0.850);transform-origin:left;"><span class="c">李静玉</span></p>
<p style="left:179.40px;top:297.66px;font-size:7.00px;color:#333;transform:scaleX(0.882);transform-origin:left;">2023/10/19</p>
<p style="left:225.80px;top:297.66px;font-size:7.00px;color:#333;transform:scaleX(0.835);transform-origin:left;">06005075440215</p>
<p style="left:281.00px;top:297.66px;font-size:7.00px;color:#333;transform:scaleX(0.850);transform-origin:left;"><span class="c">柜<i>（</i>箱<i>）</i>体</span></p>
<p style="left:335.20px;top:297.66px;font-size:7.00px;color:#333;transform:scaleX(0.850);transform-origin:left;"><span class="c">豪华电箱</span>17<span class="c">位</span> <span class="c">镀锌<i>、</i>明装</span> <span class="c">面板</span>PC<span class="c">料<i>、</i>铁质</span></p>
<p style="right:401.50px;top:297.66px;font-size:7.00px;color:#333;transform:scaleX(0.850);transform-origin:right;">1</p>
<p style="right:355.20px;top:297.66px;font-size:7.00px;color:#333;transform:scaleX(0.850);transform-origin:right;">0</p>
<p style="right:309.00px;top:297.66px;font-size:7.00px;color:#333;transform:scaleX(0.850);transform-origin:right;">1</p>
<p style="left:584.70px;top:297.66px;font-size:7.00px;color:#333;transform:scaleX(0.850);transform-origin:left;">0</p>
<p style="left:630.60px;top:297.66px;font-size:7.00px;color:#333;transform:scaleX(0.850);transform-origin:left;"><span class="c">无</span></p>
<p style="left:677.00px;top:297.66px;font-size:7.00px;color:#333;transform:scaleX(0.850);transform-origin:left;"><span class="c">无</span></p>
<div style="left:537.00px;top:306.44px;width:46.00px;height:10.68px;background:#c1c6f5;border-top:0.8px solid #d4d8f8"></div>
<p style="right:760.70px;top:308.34px;font-size:7.00px;color:#444;transform:scaleX(0.850);transform-origin:right;">19</p>
<p style="left:133.80px;top:308.34px;font-size:7.00px;color:#333;transform:scaleX(0.850);transform-origin:left;"><span class="c">李静玉</span></p>
<p style="left:179.40px;top:308.34px;font-size:7.00px;color:#333;transform:scaleX(0.882);transform-origin:left;">2023/10/19</p>
<p style="left:225.80px;top:308.34px;font-size:7.00px;color:#333;transform:scaleX(0.835);transform-origin:left;">06005075440215</p>
<p style="left:281.00px;top:308.34px;font-size:7.00px;color:#333;transform:scaleX(0.850);transform-origin:left;"><span class="c">柜<i>（</i>箱<i>）</i>体</span></p>
<p style="left:335.20px;top:308.34px;font-size:7.00px;color:#333;transform:scaleX(0.850);transform-origin:left;"><span class="c">豪华电箱</span>20<span class="c">位</span> <span class="c">镀锌<i>、</i>明装</span> <span class="c">面板</span>PC<span class="c">料<i>、</i>铁质</span></p>
<p style="right:401.50px;top:308.34px;font-size:7.00px;color:#333;transform:scaleX(0.850);transform-origin:right;">3</p>
<p style="right:355.20px;top:308.34px;font-size:7.00px;color:#333;transform:scaleX(0.850);transform-origin:right;">0</p>
<p style="right:309.00px;top:308.34px;font-size:7.00px;color:#333;transform:scaleX(0.850);transform-origin:right;">3</p>
<p style="left:584.70px;top:308.34px;font-size:7.00px;color:#333;transform:scaleX(0.850);transform-origin:left;">0</p>
<p style="left:630.60px;top:308.34px;font-size:7.00px;color:#333;transform:scaleX(0.850);transform-origin:left;"><span class="c">无</span></p>
<p style="left:677.00px;top:308.34px;font-size:7.00px;color:#333;transform:scaleX(0.850);transform-origin:left;"><span class="c">无</span></p>
<div style="left:131.30px;top:317.12px;width:745.70px;height:10.68px;background:#f4f4f4"></div>
<div style="left:537.00px;top:317.12px;width:46.00px;height:10.68px;background:#c1c6f5;border-top:0.8px solid #d4d8f8"></div>
<p style="right:760.70px;top:319.02px;font-size:7.00px;color:#444;transform:scaleX(0.850);transform-origin:right;">20</p>
<p style="left:133.80px;top:319.02px;font-size:7.00px;color:#333;transform:scaleX(0.850);transform-origin:left;"><span class="c">李静玉</span></p>
<p style="left:179.40px;top:319.02px;font-size:7.00px;color:#333;transform:scaleX(0.882);transform-origin:left;">2023/10/19</p>
<p style="left:225.80px;top:319.02px;font-size:7.00px;color:#333;transform:scaleX(0.835);transform-origin:left;">06005075440215</p>
<p style="left:281.00px;top:319.02px;font-size:7.00px;color:#333;transform:scaleX(0.850);transform-origin:left;"><span class="c">柜<i>（</i>箱<i>）</i>体</span></p>
<p style="left:335.20px;top:319.02px;font-size:7.00px;color:#333;transform:scaleX(0.850);transform-origin:left;"><span class="c">豪华电箱</span>22<span class="c">位</span> <span class="c">镀锌<i>、</i>明装</span> <span class="c">面板</span>PC<span class="c">料<i>、</i>铁质</span></p>
<p style="right:401.50px;top:319.02px;font-size:7.00px;color:#333;transform:scaleX(0.850);transform-origin:right;">1</p>
<p style="right:355.20px;top:319.02px;font-size:7.00px;color:#333;transform:scaleX(0.850);transform-origin:right;">0</p>
<p style="right:309.00px;top:319.02px;font-size:7.00px;color:#333;transform:scaleX(0.850);transform-origin:right;">1</p>
<p style="left:584.70px;top:319.02px;font-size:7.00px;color:#333;transform:scaleX(0.850);transform-origin:left;">0</p>
<p style="left:630.60px;top:319.02px;font-size:7.00px;color:#333;transform:scaleX(0.850);transform-origin:left;"><span class="c">无</span></p>
<p style="left:677.00px;top:319.02px;font-size:7.00px;color:#333;transform:scaleX(0.850);transform-origin:left;"><span class="c">无</span></p>
<div style="left:537.00px;top:327.80px;width:46.00px;height:10.68px;background:#c1c6f5;border-top:0.8px solid #d4d8f8"></div>
<p style="right:760.70px;top:329.70px;font-size:7.00px;color:#444;transform:scaleX(0.850);transform-origin:right;">21</p>
<p style="left:133.80px;top:329.70px;font-size:7.00px;color:#333;transform:scaleX(0.850);transform-origin:left;"><span class="c">李静玉</span></p>
<p style="left:179.40px;top:329.70px;font-size:7.00px;color:#333;transform:scaleX(0.882);transform-origin:left;">2023/10/19</p>
<p style="left:225.80px;top:329.70px;font-size:7.00px;color:#333;transform:scaleX(0.835);transform-origin:left;">06005075440215</p>
<p style="left:281.00px;top:329.70px;font-size:7.00px;color:#333;transform:scaleX(0.850);transform-origin:left;"><span class="c">后备保护器</span></p>
<p style="left:335.20px;top:329.70px;font-size:7.00px;color:#333;transform:scaleX(0.850);transform-origin:left;">DIC-T2/40 4P</p>
<p style="right:401.50px;top:329.70px;font-size:7.00px;color:#333;transform:scaleX(0.850);transform-origin:right;">6</p>
<p style="right:355.20px;top:329.70px;font-size:7.00px;color:#333;transform:scaleX(0.850);transform-origin:right;">0</p>
<p style="right:309.00px;top:329.70px;font-size:7.00px;color:#333;transform:scaleX(0.850);transform-origin:right;">6</p>
<p style="left:584.70px;top:329.70px;font-size:7.00px;color:#333;transform:scaleX(0.850);transform-origin:left;">0</p>
<p style="left:630.60px;top:329.70px;font-size:7.00px;color:#333;transform:scaleX(0.850);transform-origin:left;"><span class="c">无</span></p>
<p style="left:677.00px;top:329.70px;font-size:7.00px;color:#333;transform:scaleX(0.850);transform-origin:left;"><span class="c">无</span></p>
<div style="left:131.30px;top:338.48px;width:745.70px;height:10.68px;background:#f4f4f4"></div>
<div style="left:537.00px;top:338.48px;width:46.00px;height:10.68px;background:#c1c6f5;border-top:0.8px solid #d4d8f8"></div>
<p style="right:760.70px;top:340.38px;font-size:7.00px;color:#444;transform:scaleX(0.850);transform-origin:right;">22</p>
<p style="left:133.80px;top:340.38px;font-size:7.00px;color:#333;transform:scaleX(0.850);transform-origin:left;"><span class="c">李静玉</span></p>
<p style="left:179.40px;top:340.38px;font-size:7.00px;color:#333;transform:scaleX(0.882);transform-origin:left;">2023/10/19</p>
<p style="left:225.80px;top:340.38px;font-size:7.00px;color:#333;transform:scaleX(0.835);transform-origin:left;">06005075440215</p>
<p style="left:281.00px;top:340.38px;font-size:7.00px;color:#333;transform:scaleX(0.850);transform-origin:left;"><span class="c">交流接触器</span></p>
<p style="left:335.20px;top:340.38px;font-size:7.00px;color:#333;transform:scaleX(0.850);transform-origin:left;">NDC1-0910 220V 50/60Hz</p>
<p style="right:401.50px;top:340.38px;font-size:7.00px;color:#333;transform:scaleX(0.850);transform-origin:right;">7</p>
<p style="right:355.20px;top:340.38px;font-size:7.00px;color:#333;transform:scaleX(0.850);transform-origin:right;">0</p>
<p style="right:309.00px;top:340.38px;font-size:7.00px;color:#333;transform:scaleX(0.850);transform-origin:right;">7</p>
<p style="left:584.70px;top:340.38px;font-size:7.00px;color:#333;transform:scaleX(0.850);transform-origin:left;">0</p>
<p style="left:630.60px;top:340.38px;font-size:7.00px;color:#333;transform:scaleX(0.850);transform-origin:left;"><span class="c">无</span></p>
<p style="left:677.00px;top:340.38px;font-size:7.00px;color:#333;transform:scaleX(0.850);transform-origin:left;"><span class="c">无</span></p>
<div style="left:537.00px;top:349.16px;width:46.00px;height:10.68px;background:#c1c6f5;border-top:0.8px solid #d4d8f8"></div>
<p style="right:760.70px;top:351.06px;font-size:7.00px;color:#444;transform:scaleX(0.850);transform-origin:right;">23</p>
<p style="left:133.80px;top:351.06px;font-size:7.00px;color:#333;transform:scaleX(0.850);transform-origin:left;"><span class="c">李静玉</span></p>
<p style="left:179.40px;top:351.06px;font-size:7.00px;color:#333;transform:scaleX(0.882);transform-origin:left;">2023/10/19</p>
<p style="left:225.80px;top:351.06px;font-size:7.00px;color:#333;transform:scaleX(0.835);transform-origin:left;">06005075440215</p>
<p style="left:281.00px;top:351.06px;font-size:7.00px;color:#333;transform:scaleX(0.850);transform-origin:left;"><span class="c">交流接触器</span></p>
<p style="left:335.20px;top:351.06px;font-size:7.00px;color:#333;transform:scaleX(0.850);transform-origin:left;">NDC1-150 AC220V 50/60Hz</p>
<p style="right:401.50px;top:351.06px;font-size:7.00px;color:#333;transform:scaleX(0.850);transform-origin:right;">2</p>
<p style="right:355.20px;top:351.06px;font-size:7.00px;color:#333;transform:scaleX(0.850);transform-origin:right;">0</p>
<p style="right:309.00px;top:351.06px;font-size:7.00px;color:#333;transform:scaleX(0.850);transform-origin:right;">2</p>
<p style="left:584.70px;top:351.06px;font-size:7.00px;color:#333;transform:scaleX(0.850);transform-origin:left;">0</p>
<p style="left:630.60px;top:351.06px;font-size:7.00px;color:#333;transform:scaleX(0.850);transform-origin:left;"><span class="c">无</span></p>
<p style="left:677.00px;top:351.06px;font-size:7.00px;color:#333;transform:scaleX(0.850);transform-origin:left;"><span class="c">无</span></p>
<div style="left:131.30px;top:359.84px;width:745.70px;height:10.68px;background:#f4f4f4"></div>
<div style="left:537.00px;top:359.84px;width:46.00px;height:10.68px;background:#c1c6f5;border-top:0.8px solid #d4d8f8"></div>
<p style="right:760.70px;top:361.74px;font-size:7.00px;color:#444;transform:scaleX(0.850);transform-origin:right;">24</p>
<p style="left:133.80px;top:361.74px;font-size:7.00px;color:#333;transform:scaleX(0.850);transform-origin:left;"><span class="c">李静玉</span></p>
<p style="left:179.40px;top:361.74px;font-size:7.00px;color:#333;transform:scaleX(0.882);transform-origin:left;">2023/10/19</p>
<p style="left:225.80px;top:361.74px;font-size:7.00px;color:#333;transform:scaleX(0.835);transform-origin:left;">06005075440215</p>
<p style="left:281.00px;top:361.74px;font-size:7.00px;color:#333;transform:scaleX(0.850);transform-origin:left;"><span class="c">交流接触器</span></p>
<p style="left:335.20px;top:361.74px;font-size:7.00px;color:#333;transform:scaleX(0.850);transform-origin:left;">NDC1-1810 220V 50/60Hz</p>
<p style="right:401.50px;top:361.74px;font-size:7.00px;color:#333;transform:scaleX(0.850);transform-origin:right;">1</p>
<p style="right:355.20px;top:361.74px;font-size:7.00px;color:#333;transform:scaleX(0.850);transform-origin:right;">0</p>
<p style="right:309.00px;top:361.74px;font-size:7.00px;color:#333;transform:scaleX(0.850);transform-origin:right;">1</p>
<p style="left:584.70px;top:361.74px;font-size:7.00px;color:#333;transform:scaleX(0.850);transform-origin:left;">0</p>
<p style="left:630.60px;top:361.74px;font-size:7.00px;color:#333;transform:scaleX(0.850);transform-origin:left;"><span class="c">无</span></p>
<p style="left:677.00px;top:361.74px;font-size:7.00px;color:#333;transform:scaleX(0.850);transform-origin:left;"><span class="c">无</span></p>
<div style="left:537.00px;top:370.52px;width:46.00px;height:10.68px;background:#c1c6f5;border-top:0.8px solid #d4d8f8"></div>
<p style="right:760.70px;top:372.42px;font-size:7.00px;color:#444;transform:scaleX(0.850);transform-origin:right;">25</p>
<p style="left:133.80px;top:372.42px;font-size:7.00px;color:#333;transform:scaleX(0.850);transform-origin:left;"><span class="c">李静玉</span></p>
<p style="left:179.40px;top:372.42px;font-size:7.00px;color:#333;transform:scaleX(0.882);transform-origin:left;">2023/10/19</p>
<p style="left:225.80px;top:372.42px;font-size:7.00px;color:#333;transform:scaleX(0.835);transform-origin:left;">06005075440215</p>
<p style="left:281.00px;top:372.42px;font-size:7.00px;color:#333;transform:scaleX(0.850);transform-origin:left;"><span class="c">交流接触器</span></p>
<p style="left:335.20px;top:372.42px;font-size:7.00px;color:#333;transform:scaleX(0.850);transform-origin:left;">NDC1-5011 220V 50/60Hz</p>
<p style="right:401.50px;top:372.42px;font-size:7.00px;color:#333;transform:scaleX(0.850);transform-origin:right;">2</p>
<p style="right:355.20px;top:372.42px;font-size:7.00px;color:#333;transform:scaleX(0.850);transform-origin:right;">0</p>
<p style="right:309.00px;top:372.42px;font-size:7.00px;color:#333;transform:scaleX(0.850);transform-origin:right;">2</p>
<p style="left:584.70px;top:372.42px;font-size:7.00px;color:#333;transform:scaleX(0.850);transform-origin:left;">0</p>
<p style="left:630.60px;top:372.42px;font-size:7.00px;color:#333;transform:scaleX(0.850);transform-origin:left;"><span class="c">无</span></p>
<p style="left:677.00px;top:372.42px;font-size:7.00px;color:#333;transform:scaleX(0.850);transform-origin:left;"><span class="c">无</span></p>
<div style="left:131.30px;top:381.20px;width:745.70px;height:10.68px;background:#f4f4f4"></div>
<div style="left:537.00px;top:381.20px;width:46.00px;height:10.68px;background:#c1c6f5;border-top:0.8px solid #d4d8f8"></div>
<p style="right:760.70px;top:383.10px;font-size:7.00px;color:#444;transform:scaleX(0.850);transform-origin:right;">26</p>
<p style="left:133.80px;top:383.10px;font-size:7.00px;color:#333;transform:scaleX(0.850);transform-origin:left;"><span class="c">李静玉</span></p>
<p style="left:179.40px;top:383.10px;font-size:7.00px;color:#333;transform:scaleX(0.882);transform-origin:left;">2023/10/19</p>
<p style="left:225.80px;top:383.10px;font-size:7.00px;color:#333;transform:scaleX(0.835);transform-origin:left;">06005075440215</p>
<p style="left:281.00px;top:383.10px;font-size:7.00px;color:#333;transform:scaleX(0.850);transform-origin:left;"><span class="c">交流接触器</span></p>
<p style="left:335.20px;top:383.10px;font-size:7.00px;color:#333;transform:scaleX(0.850);transform-origin:left;">NDC1-8011 220V 50/60Hz</p>
<p style="right:401.50px;top:383.10px;font-size:7.00px;color:#333;transform:scaleX(0.850);transform-origin:right;">2</p>
<p style="right:355.20px;top:383.10px;font-size:7.00px;color:#333;transform:scaleX(0.850);transform-origin:right;">0</p>
<p style="right:309.00px;top:383.10px;font-size:7.00px;color:#333;transform:scaleX(0.850);transform-origin:right;">2</p>
<p style="left:584.70px;top:383.10px;font-size:7.00px;color:#333;transform:scaleX(0.850);transform-origin:left;">0</p>
<p style="left:630.60px;top:383.10px;font-size:7.00px;color:#333;transform:scaleX(0.850);transform-origin:left;"><span class="c">无</span></p>
<p style="left:677.00px;top:383.10px;font-size:7.00px;color:#333;transform:scaleX(0.850);transform-origin:left;"><span class="c">无</span></p>
<div style="left:537.00px;top:391.88px;width:46.00px;height:10.68px;background:#c1c6f5;border-top:0.8px solid #d4d8f8"></div>
<p style="right:760.70px;top:393.78px;font-size:7.00px;color:#444;transform:scaleX(0.850);transform-origin:right;">27</p>
<p style="left:133.80px;top:393.78px;font-size:7.00px;color:#333;transform:scaleX(0.850);transform-origin:left;"><span class="c">李静玉</span></p>
<p style="left:179.40px;top:393.78px;font-size:7.00px;color:#333;transform:scaleX(0.882);transform-origin:left;">2023/10/19</p>
<p style="left:225.80px;top:393.78px;font-size:7.00px;color:#333;transform:scaleX(0.835);transform-origin:left;">06005075440215</p>
<p style="left:281.00px;top:393.78px;font-size:7.00px;color:#333;transform:scaleX(0.850);transform-origin:left;"><span class="c">交流接触器辅助触点</span></p>
<p style="left:335.20px;top:393.78px;font-size:7.00px;color:#333;transform:scaleX(0.850);transform-origin:left;">NF1-20</p>
<p style="right:401.50px;top:393.78px;font-size:7.00px;color:#333;transform:scaleX(0.850);transform-origin:right;">14</p>
<p style="right:355.20px;top:393.78px;font-size:7.00px;color:#333;transform:scaleX(0.850);transform-origin:right;">0</p>
<p style="right:309.00px;top:393.78px;font-size:7.00px;color:#333;transform:scaleX(0.850);transform-origin:right;">14</p>
<p style="left:584.70px;top:393.78px;font-size:7.00px;color:#333;transform:scaleX(0.850);transform-origin:left;">0</p>
<p style="left:630.60px;top:393.78px;font-size:7.00px;color:#333;transform:scaleX(0.850);transform-origin:left;"><span class="c">无</span></p>
<p style="left:677.00px;top:393.78px;font-size:7.00px;color:#333;transform:scaleX(0.850);transform-origin:left;"><span class="c">无</span></p>
<div style="left:131.30px;top:402.56px;width:745.70px;height:10.68px;background:#f4f4f4"></div>
<div style="left:537.00px;top:402.56px;width:46.00px;height:10.68px;background:#c1c6f5;border-top:0.8px solid #d4d8f8"></div>
<p style="right:760.70px;top:404.46px;font-size:7.00px;color:#444;transform:scaleX(0.850);transform-origin:right;">28</p>
<p style="left:133.80px;top:404.46px;font-size:7.00px;color:#333;transform:scaleX(0.850);transform-origin:left;"><span class="c">李静玉</span></p>
<p style="left:179.40px;top:404.46px;font-size:7.00px;color:#333;transform:scaleX(0.882);transform-origin:left;">2023/10/19</p>
<p style="left:225.80px;top:404.46px;font-size:7.00px;color:#333;transform:scaleX(0.835);transform-origin:left;">06005075440215</p>
<p style="left:281.00px;top:404.46px;font-size:7.00px;color:#333;transform:scaleX(0.850);transform-origin:left;"><span class="c">空调面板</span></p>
<p style="left:335.20px;top:404.46px;font-size:7.00px;color:#333;transform:scaleX(0.850);transform-origin:left;">WS382WB/U<span class="c">带通讯</span> <span class="c">电源</span>AC220V</p>
<p style="right:401.50px;top:404.46px;font-size:7.00px;color:#333;transform:scaleX(0.850);transform-origin:right;">2</p>
<p style="right:355.20px;top:404.46px;font-size:7.00px;color:#333;transform:scaleX(0.850);transform-origin:right;">0</p>
<p style="right:309.00px;top:404.46px;font-size:7.00px;color:#333;transform:scaleX(0.850);transform-origin:right;">2</p>
<p style="left:584.70px;top:404.46px;font-size:7.00px;color:#333;transform:scaleX(0.850);transform-origin:left;">0</p>
<p style="left:630.60px;top:404.46px;font-size:7.00px;color:#333;transform:scaleX(0.850);transform-origin:left;"><span class="c">无</span></p>
<p style="left:677.00px;top:404.46px;font-size:7.00px;color:#333;transform:scaleX(0.850);transform-origin:left;"><span class="c">无</span></p>
<div style="left:537.00px;top:413.24px;width:46.00px;height:10.68px;background:#c1c6f5;border-top:0.8px solid #d4d8f8"></div>
<p style="right:760.70px;top:415.14px;font-size:7.00px;color:#444;transform:scaleX(0.850);transform-origin:right;">29</p>
<p style="left:133.80px;top:415.14px;font-size:7.00px;color:#333;transform:scaleX(0.850);transform-origin:left;"><span class="c">李静玉</span></p>
<p style="left:179.40px;top:415.14px;font-size:7.00px;color:#333;transform:scaleX(0.882);transform-origin:left;">2023/10/19</p>
<p style="left:225.80px;top:415.14px;font-size:7.00px;color:#333;transform:scaleX(0.835);transform-origin:left;">06005075440215</p>
<p style="left:281.00px;top:415.14px;font-size:7.00px;color:#333;transform:scaleX(0.850);transform-origin:left;"><span class="c">空调面板</span></p>
<p style="left:335.20px;top:415.14px;font-size:7.00px;color:#333;transform:scaleX(0.850);transform-origin:left;">WS984WB/U<span class="c">带通讯</span> <span class="c">电源</span>AC220V</p>
<p style="right:401.50px;top:415.14px;font-size:7.00px;color:#333;transform:scaleX(0.850);transform-origin:right;">2</p>
<p style="right:355.20px;top:415.14px;font-size:7.00px;color:#333;transform:scaleX(0.850);transform-origin:right;">0</p>
<p style="right:309.00px;top:415.14px;font-size:7.00px;color:#333;transform:scaleX(0.850);transform-origin:right;">2</p>
<p style="left:584.70px;top:415.14px;font-size:7.00px;color:#333;transform:scaleX(0.850);transform-origin:left;">0</p>
<p style="left:630.60px;top:415.14px;font-size:7.00px;color:#333;transform:scaleX(0.850);transform-origin:left;"><span class="c">无</span></p>
<p style="left:677.00px;top:415.14px;font-size:7.00px;color:#333;transform:scaleX(0.850);transform-origin:left;"><span class="c">无</span></p>
<div style="left:131.30px;top:423.92px;width:745.70px;height:10.68px;background:#f4f4f4"></div>
<div style="left:537.00px;top:423.92px;width:46.00px;height:10.68px;background:#c1c6f5;border-top:0.8px solid #d4d8f8"></div>
<p style="right:760.70px;top:425.82px;font-size:7.00px;color:#444;transform:scaleX(0.850);transform-origin:right;">30</p>
<p style="left:133.80px;top:425.82px;font-size:7.00px;color:#333;transform:scaleX(0.850);transform-origin:left;"><span class="c">李静玉</span></p>
<p style="left:179.40px;top:425.82px;font-size:7.00px;color:#333;transform:scaleX(0.882);transform-origin:left;">2023/10/19</p>
<p style="left:225.80px;top:425.82px;font-size:7.00px;color:#333;transform:scaleX(0.835);transform-origin:left;">06005075440215</p>
<p style="left:281.00px;top:425.82px;font-size:7.00px;color:#333;transform:scaleX(0.850);transform-origin:left;"><span class="c">空调面板底盒</span></p>
<p style="left:335.20px;top:425.82px;font-size:7.00px;color:#333;transform:scaleX(0.850);transform-origin:left;">86<span class="c">底盒墙装</span></p>
<p style="right:401.50px;top:425.82px;font-size:7.00px;color:#333;transform:scaleX(0.850);transform-origin:right;">2</p>
<p style="right:355.20px;top:425.82px;font-size:7.00px;color:#333;transform:scaleX(0.850);transform-origin:right;">0</p>
<p style="right:309.00px;top:425.82px;font-size:7.00px;color:#333;transform:scaleX(0.850);transform-origin:right;">2</p>
<p style="left:584.70px;top:425.82px;font-size:7.00px;color:#333;transform:scaleX(0.850);transform-origin:left;">0</p>
<p style="left:630.60px;top:425.82px;font-size:7.00px;color:#333;transform:scaleX(0.850);transform-origin:left;"><span class="c">无</span></p>
<p style="left:677.00px;top:425.82px;font-size:7.00px;color:#333;transform:scaleX(0.850);transform-origin:left;"><span class="c">无</span></p>
<div style="left:537.00px;top:434.60px;width:46.00px;height:10.68px;background:#c1c6f5;border-top:0.8px solid #d4d8f8"></div>
<p style="right:760.70px;top:436.50px;font-size:7.00px;color:#444;transform:scaleX(0.850);transform-origin:right;">31</p>
<p style="left:133.80px;top:436.50px;font-size:7.00px;color:#333;transform:scaleX(0.850);transform-origin:left;"><span class="c">李静玉</span></p>
<p style="left:179.40px;top:436.50px;font-size:7.00px;color:#333;transform:scaleX(0.882);transform-origin:left;">2023/10/19</p>
<p style="left:225.80px;top:436.50px;font-size:7.00px;color:#333;transform:scaleX(0.835);transform-origin:left;">06005075440215</p>
<p style="left:281.00px;top:436.50px;font-size:7.00px;color:#333;transform:scaleX(0.850);transform-origin:left;"><span class="c">浪涌保护器</span></p>
<p style="left:335.20px;top:436.50px;font-size:7.00px;color:#333;transform:scaleX(0.850);transform-origin:left;">DIC-40 4P</p>
<p style="right:401.50px;top:436.50px;font-size:7.00px;color:#333;transform:scaleX(0.850);transform-origin:right;">6</p>
<p style="right:355.20px;top:436.50px;font-size:7.00px;color:#333;transform:scaleX(0.850);transform-origin:right;">0</p>
<p style="right:309.00px;top:436.50px;font-size:7.00px;color:#333;transform:scaleX(0.850);transform-origin:right;">6</p>
<p style="left:584.70px;top:436.50px;font-size:7.00px;color:#333;transform:scaleX(0.850);transform-origin:left;">0</p>
<p style="left:630.60px;top:436.50px;font-size:7.00px;color:#333;transform:scaleX(0.850);transform-origin:left;"><span class="c">无</span></p>
<p style="left:677.00px;top:436.50px;font-size:7.00px;color:#333;transform:scaleX(0.850);transform-origin:left;"><span class="c">无</span></p>
<div style="left:131.30px;top:445.28px;width:745.70px;height:10.68px;background:#f4f4f4"></div>
<div style="left:537.00px;top:445.28px;width:46.00px;height:10.68px;background:#c1c6f5;border-top:0.8px solid #d4d8f8"></div>
<p style="right:760.70px;top:447.18px;font-size:7.00px;color:#444;transform:scaleX(0.850);transform-origin:right;">32</p>
<p style="left:133.80px;top:447.18px;font-size:7.00px;color:#333;transform:scaleX(0.850);transform-origin:left;"><span class="c">李静玉</span></p>
<p style="left:179.40px;top:447.18px;font-size:7.00px;color:#333;transform:scaleX(0.882);transform-origin:left;">2023/10/19</p>
<p style="left:225.80px;top:447.18px;font-size:7.00px;color:#333;transform:scaleX(0.835);transform-origin:left;">06005075440215</p>
<p style="left:281.00px;top:447.18px;font-size:7.00px;color:#333;transform:scaleX(0.850);transform-origin:left;"><span class="c">热继电器</span></p>
<p style="left:335.20px;top:447.18px;font-size:7.00px;color:#333;transform:scaleX(0.850);transform-origin:left;">NDR2-3807 1.6-2.5A</p>
<p style="right:401.50px;top:447.18px;font-size:7.00px;color:#333;transform:scaleX(0.850);transform-origin:right;">3</p>
<p style="right:355.20px;top:447.18px;font-size:7.00px;color:#333;transform:scaleX(0.850);transform-origin:right;">0</p>
<p style="right:309.00px;top:447.18px;font-size:7.00px;color:#333;transform:scaleX(0.850);transform-origin:right;">3</p>
<p style="left:584.70px;top:447.18px;font-size:7.00px;color:#333;transform:scaleX(0.850);transform-origin:left;">0</p>
<p style="left:630.60px;top:447.18px;font-size:7.00px;color:#333;transform:scaleX(0.850);transform-origin:left;"><span class="c">无</span></p>
<p style="left:677.00px;top:447.18px;font-size:7.00px;color:#333;transform:scaleX(0.850);transform-origin:left;"><span class="c">无</span></p>
<div style="left:537.00px;top:455.96px;width:46.00px;height:10.68px;background:#c1c6f5;border-top:0.8px solid #d4d8f8"></div>
<p style="right:760.70px;top:457.86px;font-size:7.00px;color:#444;transform:scaleX(0.850);transform-origin:right;">33</p>
<p style="left:133.80px;top:457.86px;font-size:7.00px;color:#333;transform:scaleX(0.850);transform-origin:left;"><span class="c">李静玉</span></p>
<p style="left:179.40px;top:457.86px;font-size:7.00px;color:#333;transform:scaleX(0.882);transform-origin:left;">2023/10/19</p>
<p style="left:225.80px;top:457.86px;font-size:7.00px;color:#333;transform:scaleX(0.835);transform-origin:left;">06005075440215</p>
<p style="left:281.00px;top:457.86px;font-size:7.00px;color:#333;transform:scaleX(0.850);transform-origin:left;"><span class="c">热继电器</span></p>
<p style="left:335.20px;top:457.86px;font-size:7.00px;color:#333;transform:scaleX(0.850);transform-origin:left;">NDR2-3808 2.5-4A</p>
<p style="right:401.50px;top:457.86px;font-size:7.00px;color:#333;transform:scaleX(0.850);transform-origin:right;">1</p>
<p style="right:355.20px;top:457.86px;font-size:7.00px;color:#333;transform:scaleX(0.850);transform-origin:right;">0</p>
<p style="right:309.00px;top:457.86px;font-size:7.00px;color:#333;transform:scaleX(0.850);transform-origin:right;">1</p>
<p style="left:584.70px;top:457.86px;font-size:7.00px;color:#333;transform:scaleX(0.850);transform-origin:left;">0</p>
<p style="left:630.60px;top:457.86px;font-size:7.00px;color:#333;transform:scaleX(0.850);transform-origin:left;"><span class="c">无</span></p>
<p style="left:677.00px;top:457.86px;font-size:7.00px;color:#333;transform:scaleX(0.850);transform-origin:left;"><span class="c">无</span></p>
<div style="left:131.00px;top:102.50px;width:0.80px;height:364.10px;background:#c8cde6"></div>
<div style="left:877.00px;top:101.50px;width:12.00px;height:365.10px;background:#f0f0f0"></div>
<div style="left:879.00px;top:110.00px;width:7.50px;height:230.00px;background:#c6c6c6"></div>
<svg style="left:879px;top:103px" width="7" height="5"><path d="M1 3.8L3.5 1.3L6 3.8" stroke="#555" stroke-width="0.9" fill="none"/></svg>
<svg style="left:879.5px;top:460.5px" width="7" height="5"><path d="M1 1.2L3.5 3.7L6 1.2" stroke="#555" stroke-width="0.9" fill="none"/></svg>
<div style="left:0.00px;top:466.60px;width:889.00px;height:14.80px;background:#f0f0f0"></div>
<div style="left:113.50px;top:466.60px;width:763.50px;height:0.80px;background:#d8d8d8"></div>
<p style="left:2.00px;top:470.80px;font-size:6.70px;color:#333;transform:scaleX(0.885);transform-origin:left;"><span class="c">李静玉</span> <span class="c">已登录到</span>192.168.6.236/xkerp</p>
<div style="left:100.50px;top:470.50px;width:0.80px;height:10.00px;background:#c8c8c8"></div>
<div style="left:658.00px;top:471.00px;width:95.00px;height:11.00px;background:#fafafa;border:0.7px solid #e2e2e2"></div>
<svg style="left:658px;top:471px" width="95" height="11"><rect x="1" y="0.6" width="11.6" height="10" rx="2" fill="#e5552c" transform="rotate(-4 6.8 5.6)"/><path d="M9.6 3.2C8.4 1.9 4.4 2 4.5 3.9C4.6 5.6 9 5 9 7C9 9 5.1 9 3.8 7.6" stroke="#fff" stroke-width="1.4" fill="none"/><rect x="16" y="3.2" width="6.2" height="3.8" stroke="#2a6fd0" stroke-width="1" fill="none"/><path d="M19.1 1.2v8.6" stroke="#2a6fd0" stroke-width="1.1"/><circle cx="28.2" cy="4.8" r="0.9" fill="#2a6fd0"/><path d="M31 5.8l0.9 1.6l-0.6 1" stroke="#2a6fd0" stroke-width="0.9" fill="none"/><circle cx="39.7" cy="5.6" r="3.4" stroke="#2a6fd0" stroke-width="0.9" fill="none"/><path d="M38.3 4.3v1M41.1 4.3v1M38.2 6.6a1.6 1.6 0 0 0 3 0" stroke="#2a6fd0" stroke-width="0.7" fill="none"/><rect x="48.1" y="1.6" width="2.7" height="5.2" rx="1.35" fill="#2a6fd0"/><path d="M47.2 6a2.2 2.2 0 0 0 4.4 0M49.4 8.2v2" stroke="#2a6fd0" stroke-width="0.7" fill="none"/><rect x="56" y="2.8" width="7.6" height="5.4" rx="0.8" stroke="#2a6fd0" stroke-width="0.9" fill="#cfe0f6"/><circle cx="70" cy="4" r="1.3" fill="#9aa"/><path d="M67.8 9.5v-2.2a2.2 2 0 0 1 4.4 0v2.2z" fill="#aab"/><path d="M77 3.2l1.6-1.2h2.8l1.6 1.2l-0.9 1.6h-0.6v4.6h-3v-4.6h-0.6z" fill="#2a6fd0"/><rect x="87" y="2.3" width="6.2" height="6.2" fill="#2a6fd0"/><path d="M87 5.4h6.2M90.1 2.3v6.2" stroke="#fff" stroke-width="0.6"/></svg>
<div style="left:0.00px;top:481.50px;width:889.00px;height:18.50px;background:linear-gradient(#1c242a,#33363a 35%,#2e323a 60%,#353536)"></div>
<div style="left:0.00px;top:481.50px;width:224.00px;height:18.50px;background:linear-gradient(90deg,#0c0f13,#13161a 80%,#181b20)"></div>
<svg style="left:6.5px;top:486.5px" width="9" height="9"><path d="M0.5 1.4l3.2-0.5v3.2H0.5zM4.3 0.8l4.2-0.6v3.9h-4.2zM0.5 4.7h3.2v3.2l-3.2-0.5zM4.3 4.7h4.2v3.9l-4.2-0.6z" fill="#e8e8ee"/></svg>
<svg style="left:27px;top:484.5px" width="11" height="11"><circle cx="6.2" cy="4.6" r="3" stroke="#fff" stroke-width="1" fill="none"/><path d="M4.1 6.8L1.5 9.5" stroke="#fff" stroke-width="1.1"/></svg>
<svg style="left:49px;top:485px" width="12" height="11"><rect x="2" y="2" width="6" height="6" stroke="#fff" stroke-width="0.9" fill="none"/><path d="M0.7 3v4M10 2v6M11.3 2v6" stroke="#fff" stroke-width="0.8"/></svg>
<svg style="left:73px;top:484.7px" width="12" height="12"><circle cx="6" cy="6" r="5.4" fill="#db4437"/><path d="M6 6L1.3 8.7A5.4 5.4 0 0 0 8.7 10.7z" fill="#0f9d58"/><path d="M6 6L10.7 3.3A5.4 5.4 0 0 1 8.7 10.7z" fill="#f4c20d"/><circle cx="6" cy="6" r="2.6" fill="#fff"/><circle cx="6" cy="6" r="2" fill="#4285f4"/></svg>
<svg style="left:95.5px;top:485px" width="12" height="11"><rect x="0.5" y="1" width="11" height="8" fill="#4fa3e0"/><rect x="1.5" y="2" width="9" height="6" fill="#9fd4f5"/><path d="M3 4l2.5 2L9 3" stroke="#1e5ea8" stroke-width="0.9" fill="none"/><rect x="3.5" y="9" width="5" height="1.5" fill="#6fb5ea"/></svg>
<svg style="left:118px;top:485px" width="12" height="11"><path d="M0.5 1.5h4l1 1.2h6v7.5h-11z" fill="#f3c54a"/><rect x="0.5" y="4" width="11" height="6.2" fill="#fbd970"/><rect x="3" y="6.5" width="6" height="2" fill="#4ea2e8"/></svg>
<svg style="left:141px;top:485px" width="12" height="11"><rect x="4" y="0.5" width="7.5" height="10" fill="#c8d8f0"/><rect x="0.5" y="2" width="7" height="7" fill="#2b579a"/><path d="M1.5 3.5l1.2 4l1.3-3l1.3 3l1.2-4" stroke="#fff" stroke-width="0.7" fill="none"/></svg>
<svg style="left:164px;top:484.7px" width="12" height="12"><circle cx="6" cy="6" r="5.4" fill="#4cae3c"/><path d="M8.5 3.5C7 2 3.5 2.8 3.5 5.5C3.5 8.5 7.5 9 9 7" stroke="#fff" stroke-width="1.1" fill="none"/><path d="M6 4.5v2.5h2" stroke="#fff" stroke-width="0.8" fill="none"/></svg>
<svg style="left:186.5px;top:485px" width="12" height="11"><rect x="4" y="0.5" width="7.5" height="10" fill="#bde0c8"/><rect x="0.5" y="2" width="7" height="7" fill="#1d6f42"/><path d="M2 3.3l3 4.4M5 3.3l-3 4.4" stroke="#fff" stroke-width="0.8"/><path d="M8.5 3h2M8.5 5h2M8.5 7h2" stroke="#1d6f42" stroke-width="0.6"/></svg>
<svg style="left:209px;top:485px" width="12" height="11"><rect x="0.5" y="0.5" width="11" height="10" fill="#2a5a9c"/><path d="M3 2.5l6 6M3 2.5v3.5M3 2.5h3.5" stroke="#7fb0e8" stroke-width="1" fill="none"/></svg>
<div style="left:92.00px;top:499.00px;width:132.00px;height:1.00px;background:#55565c"></div>
<svg style="left:755px;top:481.5px" width="134" height="18.5"><path d="M8 10.8L10.6 8.2L13.2 10.8" stroke="#ddd" stroke-width="0.9" fill="none"/><circle cx="21.2" cy="8.6" r="3.4" fill="#c8dcf0"/><circle cx="21.2" cy="8.6" r="1.6" fill="#3d7fd0"/><circle cx="23.3" cy="10.7" r="1.6" fill="#d23a4a"/><rect x="29" y="4.6" width="6.8" height="5" stroke="#ddd" stroke-width="0.9" fill="none"/><path d="M32.4 9.6v1.8M30.5 11.8h3.8" stroke="#ddd" stroke-width="0.8"/><path d="M35.8 5.5v5" stroke="#ddd" stroke-width="0.6"/><path d="M40.2 7.2h1.4l2.2-2v7.2l-2.2-2h-1.4z" fill="#ddd"/><circle cx="46" cy="10.6" r="1.7" fill="#d23a4a"/><rect x="52.3" y="6.3" width="5.4" height="3.6" stroke="#ddd" stroke-width="0.8" fill="none"/><path d="M55 4.2v8.6" stroke="#ddd" stroke-width="0.9"/><rect x="63.3" y="4.2" width="7.7" height="8" rx="1.2" fill="#e5552c"/><path d="M69 5.8C68 5 65 5 65.1 6.6C65.2 8 68.6 7.6 68.6 9.2C68.6 10.8 65.6 10.8 64.6 9.8" stroke="#fff" stroke-width="1" fill="none"/><path d="M115.6 4h8v5.6h-4.3l-1.9 1.9v-1.9h-1.8z" stroke="#ddd" stroke-width="0.8" fill="none"/></svg>
<p style="left:840.80px;top:481.00px;font-size:7.00px;color:#fff;transform:scaleX(0.810);transform-origin:left;">17:32</p>
<p style="left:832.00px;top:491.00px;font-size:7.00px;color:#fff;transform:scaleX(0.876);transform-origin:left;">2023/10/21</p>
<svg style="left:0;top:0" width="889" height="500"><g fill="rgba(136,166,144,0.72)"><path d="M496.9 367.7h33.7v3.4h-33.7z M511.4 366h4.8v17h-4.8z M501.9 377h24.5v3.4h-24.5z"/><path fill-rule="evenodd" d="M498.5 383.7h30.4v11.8h-30.4z M502 386.6v5.4h23.4v-5.4z"/><path d="M538.2 366.9h29.5v3.7h-29.5z M533.6 376.1h38.3v3.7h-38.3z"/><path d="M546 379.8h5.2l-8.6 11.5h20.2l-2.6-4.3h4.6l6.9 8.5h-35.2v-4.2z"/><path d="M574.4 366.9h31.2v25.5a3.2 3.2 0 0 1 -3.2 3.2h-4.4v-3.8h3.2v-21h-22.4v25.6h-4.4z"/><path d="M580.5 374.5l3.6-0.6l3.2 6.4l2.6-6.2l3.4 0.8l-4 8.2l4.6 7.5l-3.3 1.2l-3.1-5.3l-3.1 5.6l-3.3-1.3l4.5-7.6z"/><path d="M591.5 374.5l3.4-0.4l2.4 4.8l2-4.6l3 0.8l-3.2 6.3l3.4 6l-2.9 1.2l-2.3-4.2l-2.4 4.2l-2.8-1.3l3.5-6.1z" opacity="0.9"/></g></svg>
<svg style="left:0;top:0" width="889" height="500"><line x1="94" y1="239.5" x2="138.6" y2="104.5" stroke="#c0283a" stroke-width="1.45"/><polygon points="139.7,100.6 135.4,106.8 142.4,106.6" fill="#e01e1e"/></svg>
<script>(function(){function W(t){var s=document.createElement("span");s.style.cssText="position:absolute;left:0;top:0;font-size:100px;font-family:'Liberation Sans',sans-serif;white-space:nowrap;visibility:hidden";s.textContent=t;document.body.appendChild(s);var w=s.getBoundingClientRect().width;s.parentNode.removeChild(s);return w;}if(Math.abs(W("国国国国")-W(""))>2)document.documentElement.className="cjk";})();</script>
</body></html>
